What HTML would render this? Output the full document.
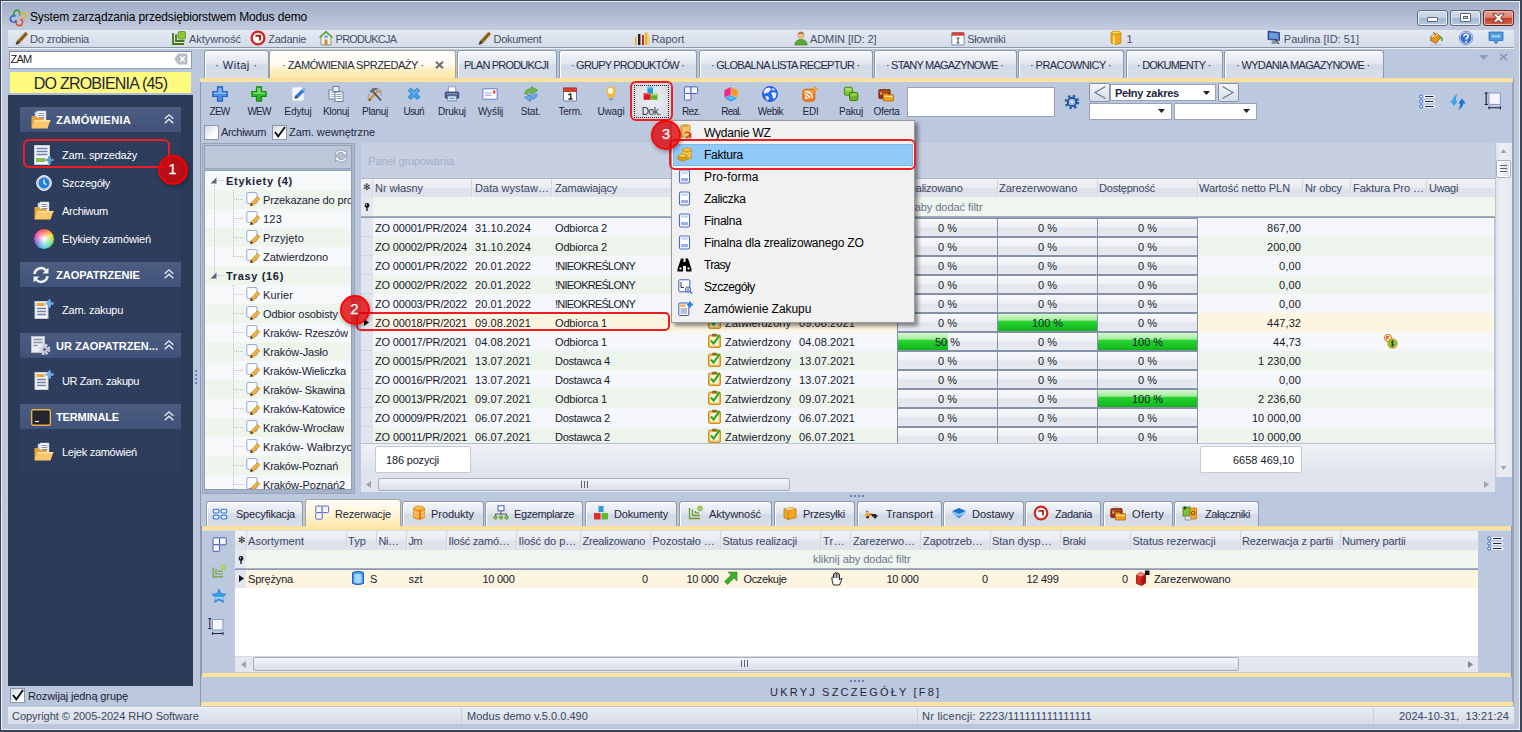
<!DOCTYPE html>
<html lang="pl"><head><meta charset="utf-8"><title>System zarządzania przedsiębiorstwem Modus demo</title>
<style>
*{box-sizing:border-box;margin:0;padding:0}
html,body{width:1522px;height:732px;overflow:hidden}
body{position:relative;font-family:"Liberation Sans","DejaVu Sans",sans-serif;font-size:11px;color:#1b2234;background:#b9c7dd;line-height:1}
.a{position:absolute}
.t{position:absolute;white-space:pre;line-height:13px;height:13px}
.r{text-align:right}
.c{text-align:center}
svg{position:absolute;overflow:visible}
#frame{left:0;top:0;width:1522px;height:732px;border:1px solid #3c4557;border-right-width:2px;border-bottom-width:2px;background:linear-gradient(180deg,#a2aec7 0,#a9b5cc 8px,#c4cde0 30px,#bfc9dc 60px,#bdc7da 100%)}
#frame2{left:1px;top:1px;width:1519px;height:729px;border:1px solid #e9eef6}
#client{left:8px;top:30px;width:1506px;height:695px;background:#bbc7dc}
#menubar{left:8px;top:30px;width:1506px;height:17px;background:linear-gradient(180deg,#e4e9f2,#d6dde9)}
#menuline{left:8px;top:47px;width:1506px;height:1px;background:#8d98ab}
#menuline2{left:8px;top:48px;width:1506px;height:1px;background:#eef1f6}
.mi{color:#353f55}

#nav{left:8px;top:95px;width:185px;height:591px;background:#2b3a57}
.gh{position:absolute;left:20px;width:161px;height:25px;background:linear-gradient(180deg,#4c5d81,#41527a)}
.gb{position:absolute;left:20px;width:161px;background:#2c3b59}
.ni{color:#fff}

.tab{position:absolute;top:50px;height:28px;border:1px solid #8d99ae;border-bottom:none;border-radius:3px 3px 0 0;background:linear-gradient(180deg,#f4f6fa 0,#e3e8f0 45%,#d3dae6 55%,#d9dfea 100%);box-shadow:inset 1px 1px 0 #fff}
.tab.act{background:linear-gradient(180deg,#fffefc 0,#fffaf0 50%,#fef0c8 62%,#fee6a6 100%);border-color:#a9a592;height:29px;box-shadow:none}
#panel{left:200px;top:78px;width:1314px;height:628px;border:1px solid #8d99ae;border-right:2px solid #98a4bc;border-top:none;background:#bcc8dd}

.cb{position:absolute;width:15px;height:15px;border:1px solid #8c97ab;background:linear-gradient(135deg,#d3d9e4,#fff 70%)}

.trow{position:absolute;left:205px;width:146px;height:19px}

.gr{position:absolute;left:373px;width:1121px;height:19px}
.pc{position:absolute;height:19px;width:101px;border:1px solid #8591a8;background:linear-gradient(180deg,#f8f9fb 0,#eff1f5 45%,#e2e5ec 55%,#e7eaf0 100%)}
.pg{position:absolute;height:17px;background:linear-gradient(180deg,#d4f8ce 0,#a6ec9e 36%,#2ad234 44%,#1cc626 70%,#12b41c 100%)}
.hd{color:#35415c}

.bt{position:absolute;top:501px;height:25px;border:1px solid #8d99ae;border-bottom:none;border-radius:3px 3px 0 0;background:linear-gradient(180deg,#f4f6fa 0,#e3e8f0 45%,#d3dae6 55%,#d9dfea 100%);box-shadow:inset 1px 1px 0 #fff}
.bt.act{top:499px;height:28px;background:linear-gradient(180deg,#fffefb 0,#fff4d6 50%,#fee7ab 100%);border-color:#a9a592;box-shadow:none}

#ddm{left:671px;top:120px;width:244px;height:203px;background:#f1f1f1;border:1px solid #9b9b9b;box-shadow:3px 3px 4px rgba(0,0,0,0.45)}

.rr{position:absolute;border:2px solid #ee1c25;border-radius:6px}
.rc{position:absolute;width:30px;height:30px;border-radius:50%;background:rgba(222,0,4,0.78);border:2px solid rgba(255,0,0,0.9);box-shadow:1px 2px 4px rgba(0,0,0,0.35);color:#fff;font-size:14.5px;line-height:25px;text-align:center;-webkit-text-stroke:0.25px #fff}
</style></head><body>
<!-- s00_base -->
<div id="frame" class="a"></div><div id="frame2" class="a"></div><div id="client" class="a"></div>
<svg style="left:9px;top:9px" width="18" height="18" viewBox="0 0 18 18">
<circle cx="8" cy="4.4" r="3.1" fill="none" stroke="#3f9a3c" stroke-width="1.5" stroke-dasharray="15 4.5" transform="rotate(120 8 4.4)"/>
<circle cx="14" cy="6.5" r="2.9" fill="none" stroke="#e8b21c" stroke-width="1.5" stroke-dasharray="14 4.2" transform="rotate(200 14 6.5)"/>
<circle cx="4.4" cy="10" r="3.1" fill="none" stroke="#2f5fd0" stroke-width="1.5" stroke-dasharray="15 4.5" transform="rotate(20 4.4 10)"/>
<circle cx="10.3" cy="13.3" r="3.2" fill="none" stroke="#d8482c" stroke-width="1.5" stroke-dasharray="15.5 4.6" transform="rotate(290 10.3 13.3)"/>
</svg><div class="t" style="left:30px;top:10px;font-size:12px;line-height:15px;height:15px;color:#000;letter-spacing:-0.15px">System zarządzania przedsiębiorstwem Modus demo</div>
<div class="a" style="left:1417px;top:10px;width:31px;height:16px;border:1px solid #5d6b84;border-radius:3px;background:linear-gradient(180deg,#d3deec 0,#c3d1e4 48%,#a3b8d2 52%,#b7c9df 100%);box-shadow:inset 0 0 0 1px #e6edf6"></div>
<div class="a" style="left:1427px;top:17px;width:11px;height:5px;border:1px solid #5b6476;border-radius:1px;background:#fff"></div>
<div class="a" style="left:1450px;top:10px;width:31px;height:16px;border:1px solid #5d6b84;border-radius:3px;background:linear-gradient(180deg,#d3deec 0,#c3d1e4 48%,#a3b8d2 52%,#b7c9df 100%);box-shadow:inset 0 0 0 1px #e6edf6"></div>
<div class="a" style="left:1460px;top:13px;width:11px;height:9px;border:1px solid #5b6476;border-radius:1px;background:#fff"></div>
<div class="a" style="left:1463px;top:16px;width:5px;height:3px;border:1px solid #5b6476;background:#c5d0e2"></div>
<div class="a" style="left:1483px;top:10px;width:31px;height:16px;border:1px solid #5e2024;border-radius:3px;background:linear-gradient(180deg,#e8a598 0,#d87f6f 48%,#c03e2a 52%,#d0664c 100%);box-shadow:inset 0 0 0 1px #efb9ae"></div>
<svg style="left:1492px;top:13px" width="13" height="10" viewBox="0 0 13 10"><path d="M0.8 0.8 L4.6 0.8 L6.5 3 L8.4 0.8 L12.2 0.8 L8.6 5 L12.2 9.2 L8.4 9.2 L6.5 7 L4.6 9.2 L0.8 9.2 L4.4 5 Z" fill="#fff" stroke="#6a3430" stroke-width="1" stroke-linejoin="round"/></svg>
<div id="menubar" class="a"></div><div id="menuline" class="a"></div><div id="menuline2" class="a"></div>
<div class="t " style="left:30.0px;top:33px;letter-spacing:-0.23px;color:#455069;">Do zrobienia</div><div class="t " style="left:189.0px;top:33px;letter-spacing:-0.06px;color:#455069;">Aktywność</div><div class="t " style="left:268.2px;top:33px;letter-spacing:-0.25px;color:#455069;">Zadanie</div><div class="t " style="left:335.6px;top:33px;letter-spacing:-0.80px;color:#455069;">PRODUKCJA</div><div class="t " style="left:493.5px;top:33px;letter-spacing:-0.27px;color:#455069;">Dokument</div><div class="t " style="left:651.4px;top:33px;color:#455069;">Raport</div><div class="t " style="left:810.0px;top:33px;letter-spacing:-0.10px;color:#455069;">ADMIN [ID: 2]</div><div class="t " style="left:967.3px;top:33px;letter-spacing:-0.29px;color:#455069;">Słowniki</div><div class="t " style="left:1126.6px;top:33px;color:#455069;">1</div><div class="t " style="left:1283.8px;top:33px;color:#455069;">Paulina [ID: 51]</div><svg style="left:15px;top:31px" width="14" height="15" viewBox="0 0 14 15"><path d="M1 13.5 L2.2 9.8 L10.5 1 L12.8 3.2 L4.5 12.2 Z" fill="#e8b84a" stroke="#7a5a1a" stroke-width="0.7"/><path d="M3.5 11 L11.5 2.2" stroke="#5a4010" stroke-width="1.6"/><path d="M1 13.5 L2.2 9.8 L4.5 12.2 Z" fill="#333"/><path d="M2 14.5 H9" stroke="#c9ced8" stroke-width="1"/></svg><svg style="left:172px;top:31px" width="14" height="14" viewBox="0 0 14 14"><rect x="6" y="0.5" width="7.5" height="7.5" rx="1.5" fill="#8cc63a" stroke="#4f8a1f" stroke-width="0.8"/><path d="M1 2 V13 H12 M4 3.5 V10 H12.5" fill="none" stroke="#3f7a12" stroke-width="1.8"/></svg><svg style="left:250px;top:30px" width="16" height="16" viewBox="0 0 16 16"><circle cx="8" cy="8" r="6.4" fill="#fff" stroke="#d0281e" stroke-width="2.4"/><path d="M5.5 5.8 H10 V10.5" fill="none" stroke="#a82018" stroke-width="1.9"/></svg><svg style="left:319px;top:30px" width="14" height="16" viewBox="0 0 14 16"><path d="M7 1 L13.5 7 H12 V15 H2 V7 H0.5 Z" fill="#f4f1ea" stroke="#8a7a5a" stroke-width="0.8"/><path d="M7 0.8 L13.8 7 L12.5 8 L7 3 L1.5 8 L0.2 7 Z" fill="#5fa83a"/><rect x="5.5" y="9.5" width="3" height="5.5" fill="#c98a3a"/><rect x="5" y="5.5" width="4" height="2.6" fill="#7fb2f0"/></svg><svg style="left:478px;top:31px" width="14" height="15" viewBox="0 0 14 15"><path d="M1 13.5 L2.2 9.8 L10.5 1 L12.8 3.2 L4.5 12.2 Z" fill="#e8b84a" stroke="#7a5a1a" stroke-width="0.7"/><path d="M3.5 11 L11.5 2.2" stroke="#5a4010" stroke-width="1.6"/><path d="M1 13.5 L2.2 9.8 L4.5 12.2 Z" fill="#333"/><path d="M2 14.5 H9" stroke="#c9ced8" stroke-width="1"/></svg><svg style="left:634px;top:31px" width="16" height="15" viewBox="0 0 16 15"><rect x="1" y="6" width="1.6" height="8" fill="#f2b01a"/><rect x="4" y="3" width="2.4" height="11" fill="#222"/><rect x="8" y="4" width="2" height="10" fill="#d0281e"/><rect x="11" y="1.5" width="2.4" height="12.5" fill="#f2b01a"/><rect x="14" y="3.5" width="1.4" height="10.5" fill="#f2d06a"/></svg><svg style="left:794px;top:31px" width="14" height="15" viewBox="0 0 14 15"><circle cx="7" cy="4" r="3.2" fill="#f2c38a" stroke="#b8844a" stroke-width="0.6"/><path d="M3.8 3 Q7 -0.5 10.2 3 Q7 2 3.8 3 Z" fill="#7a4a1a"/><path d="M0.8 14 Q1 8.5 7 8.5 Q13 8.5 13.2 14 Z" fill="#5fa83a" stroke="#3f7a12" stroke-width="0.6"/></svg><svg style="left:951px;top:31px" width="14" height="15" viewBox="0 0 14 15"><rect x="0.8" y="1.5" width="12.4" height="12.5" rx="1" fill="#fff" stroke="#7a86a8" stroke-width="1"/><rect x="0.8" y="1.5" width="12.4" height="3.2" fill="#d9402f"/><path d="M7 7 V12 M5.5 7 H8.5 M5.5 12 H8.5" stroke="#444" stroke-width="1"/></svg><svg style="left:1110px;top:30px" width="12" height="16" viewBox="0 0 12 16"><ellipse cx="6" cy="3" rx="5" ry="2" fill="#fbd24a" stroke="#b8860b" stroke-width="0.7"/><path d="M1 3 V13 Q6 16 11 13 V3 Q6 6 1 3 Z" fill="#f2a81a" stroke="#b8860b" stroke-width="0.7"/><path d="M4 5.5 V14.5" stroke="#fde59a" stroke-width="1.6"/></svg><svg style="left:1267px;top:30px" width="14" height="16" viewBox="0 0 14 16"><path d="M1 1 L12.5 2.5 V10.5 L1 9.5 Z" fill="#3a5aa8" stroke="#24387a" stroke-width="0.7"/><path d="M2.2 2.4 L11.3 3.6 V9.4 L2.2 8.4 Z" fill="#6a9ae0"/><path d="M5 10 L9 10.5 L10 14 H4.5 Z" fill="#8a93a8"/><path d="M8 9 L12 14" stroke="#333" stroke-width="1.2"/></svg><svg style="left:1429px;top:31px" width="14" height="15" viewBox="0 0 14 15"><path d="M2 5 L7.5 2 L12 6 L7 12.5 L1.5 9.5 Z" fill="#e8941c" stroke="#7a4a10" stroke-width="0.7"/><path d="M2 5 L7.5 2 L9 3.4 L3.5 6.5 Z" fill="#fbd58a"/><path d="M4 1 L7 4" stroke="#7a4a10" stroke-width="1"/><path d="M10.5 6 Q13.5 6.5 12.8 10" fill="none" stroke="#4fa83a" stroke-width="1.8"/><path d="M1 14 H13" stroke="#c3c9d6" stroke-width="1.6"/></svg><svg style="left:1459px;top:31px" width="14" height="14" viewBox="0 0 14 14"><circle cx="7" cy="7" r="6.3" fill="#3a6fd8" stroke="#eef2fa" stroke-width="1.2"/><circle cx="7" cy="7" r="6.8" fill="none" stroke="#3a5ab8" stroke-width="0.6"/><path d="M4.8 5.5 Q5 3.2 7 3.2 Q9.2 3.2 9.2 5.2 Q9.2 6.5 7.2 7.5 V8.6" fill="none" stroke="#fff" stroke-width="1.6"/><circle cx="7.2" cy="10.8" r="1" fill="#fff"/></svg><svg style="left:1488px;top:31px" width="16" height="14" viewBox="0 0 16 14"><path d="M1 1 H15 V9.5 H10.5 L8 12.8 L5.5 9.5 H1 Z" fill="#4a9be0" stroke="#2a6ab8" stroke-width="0.8"/><circle cx="5" cy="5.3" r="1" fill="none" stroke="#fff" stroke-width="0.7"/><circle cx="8" cy="5.3" r="1" fill="none" stroke="#fff" stroke-width="0.7"/><circle cx="11" cy="5.3" r="1" fill="none" stroke="#fff" stroke-width="0.7"/></svg>
<!-- s10_nav -->
<div class="a " style="left:8px;top:95px;width:185px;height:591px;background:#2b3a57"></div><svg style="left:0;top:0" width="0" height="0"><defs><pattern id="ndots" width="4" height="4" patternUnits="userSpaceOnUse"><rect x="0" y="1" width="1" height="1" fill="#3c4d70"/><rect x="2" y="3" width="1" height="1" fill="#3c4d70"/></pattern></defs></svg><div class="a " style="left:9px;top:51px;width:183px;height:18px;background:#fff;border:1px solid #8f9bb0;border-top-color:#7d899e"></div><div class="t " style="left:10.5px;top:53px;letter-spacing:-0.80px;color:#222;">ZAM</div><svg style="left:174px;top:53px" width="14" height="12" viewBox="0 0 14 11" preserveAspectRatio="none"><path d="M4 0.5 H12.5 Q13.5 0.5 13.5 1.5 V9.5 Q13.5 10.5 12.5 10.5 H4 L0.3 5.5 Z" fill="#b9bdc4"/><path d="M6.3 3.2 L10.7 7.8 M10.7 3.2 L6.3 7.8" stroke="#fff" stroke-width="1.5"/></svg><div class="a " style="left:10px;top:72px;width:181px;height:21px;background:#fffb7e"></div><div class="a " style="left:8px;top:93px;width:185px;height:2px;background:#b4bfd3"></div><div class="t " style="left:33.8px;top:75px;letter-spacing:-0.78px;font-size:16px;color:#1f2638;line-height:18px;height:18px;">DO ZROBIENIA (45)</div><div class="gh" style="top:107px"></div><svg style="left:31px;top:111px" width="20" height="18" viewBox="0 0 20 18">
<path d="M4 1 H13 V12 H4 Z" fill="#eef1f6" stroke="#aab3c4" stroke-width="0.6"/>
<path d="M6 0 H15 V11 H6 Z" fill="#fff" stroke="#aab3c4" stroke-width="0.6"/>
<path d="M7.5 2.5 H13.5 M7.5 4.5 H13.5 M7.5 6.5 H13.5" stroke="#7f8fb5" stroke-width="1"/>
<path d="M0.5 5 H5 L6.5 7 H13 V17 H0.5 Z" fill="#e9a33c"/>
<path d="M3.5 9 H19.5 L16.5 17.5 H0.5 Z" fill="#fbc768"/>
<path d="M3.5 9 H19.5 L19 10.5 H3 Z" fill="#fde1a3"/>
</svg><div class="t " style="left:56.0px;top:114px;letter-spacing:0.29px;font-weight:bold;color:#fff;">ZAMÓWIENIA</div><svg style="left:164px;top:114px" width="10" height="10" viewBox="0 0 10 10"><path d="M0.7 4.8 L5 0.8 L9.3 4.8 M0.7 9.2 L5 5.2 L9.3 9.2" fill="none" stroke="#e8ecf4" stroke-width="1.3"/></svg><div class="gb" style="top:132px;height:130px"><svg style="left:0;top:0" width="161" height="130"><rect width="161" height="130" fill="url(#ndots)"/></svg></div><svg style="left:34px;top:145px" width="20" height="20" viewBox="0 0 20 20">
<rect x="0.5" y="0.5" width="15" height="19" fill="#f4f5f8" stroke="#c7ccd6" stroke-width="1"/>
<path d="M2.5 3.5 H13.5 M2.5 6.5 H13.5 M2.5 9.5 H13.5" stroke="#6f7fb0" stroke-width="1.6"/><rect x="2" y="13" width="9" height="4" fill="#8dbb4e"/>
<path d="M15.5 11 V19 M11.5 15 H19.5" stroke="#5b9bd5" stroke-width="2.6"/>
</svg><div class="t ni" style="left:62.0px;top:149px;letter-spacing:-0.23px;">Zam. sprzedaży</div><svg style="left:36px;top:175px" width="16" height="16" viewBox="0 0 16 16">
<circle cx="8" cy="8" r="7.4" fill="#c9ccd3" stroke="#eef0f3" stroke-width="1"/>
<circle cx="8" cy="8" r="5.4" fill="#1f7fe0"/>
<path d="M8 4.5 V8 L10.3 9.8" stroke="#fff" stroke-width="1.3" fill="none"/></svg><div class="t ni" style="left:62.0px;top:177px;letter-spacing:-0.24px;">Szczegóły</div><svg style="left:34px;top:202px" width="20" height="18" viewBox="0 0 20 18">
<path d="M4 1 H13 V12 H4 Z" fill="#eef1f6" stroke="#aab3c4" stroke-width="0.6"/>
<path d="M6 0 H15 V11 H6 Z" fill="#fff" stroke="#aab3c4" stroke-width="0.6"/>
<path d="M7.5 2.5 H13.5 M7.5 4.5 H13.5 M7.5 6.5 H13.5" stroke="#7f8fb5" stroke-width="1"/>
<path d="M0.5 5 H5 L6.5 7 H13 V17 H0.5 Z" fill="#e9a33c"/>
<path d="M3.5 9 H19.5 L16.5 17.5 H0.5 Z" fill="#fbc768"/>
<path d="M3.5 9 H19.5 L19 10.5 H3 Z" fill="#fde1a3"/>
</svg><div class="t ni" style="left:62.0px;top:205px;letter-spacing:-0.29px;">Archiwum</div><div class="a" style="left:34px;top:229px;width:20px;height:20px;border-radius:50%;background:conic-gradient(#ff3b30,#ffcc00,#4cd964,#34c8e8,#5856d6,#ff2d95,#ff3b30)"></div><div class="a" style="left:34px;top:229px;width:20px;height:20px;border-radius:50%;background:radial-gradient(circle,#fff 0,rgba(255,255,255,0.2) 60%,rgba(255,255,255,0) 75%)"></div><div class="t ni" style="left:62.0px;top:233px;letter-spacing:-0.12px;">Etykiety zamówień</div><div class="gh" style="top:262px"></div><svg style="left:32px;top:266px" width="18" height="18" viewBox="0 0 18 18">
<path d="M2.5 8 A6.5 6.5 0 0 1 14 4.5" fill="none" stroke="#eef1f6" stroke-width="2.6"/><path d="M16.5 1.5 V7.5 H10.5 Z" fill="#eef1f6"/>
<path d="M15.5 10 A6.5 6.5 0 0 1 4 13.5" fill="none" stroke="#eef1f6" stroke-width="2.6"/><path d="M1.5 16.5 V10.5 H7.5 Z" fill="#eef1f6"/></svg><div class="t " style="left:56.0px;top:269px;font-weight:bold;color:#fff;">ZAOPATRZENIE</div><svg style="left:164px;top:269px" width="10" height="10" viewBox="0 0 10 10"><path d="M0.7 4.8 L5 0.8 L9.3 4.8 M0.7 9.2 L5 5.2 L9.3 9.2" fill="none" stroke="#e8ecf4" stroke-width="1.3"/></svg><div class="gb" style="top:287px;height:46px"><svg style="left:0;top:0" width="161" height="46"><rect width="161" height="46" fill="url(#ndots)"/></svg></div><svg style="left:34px;top:299px" width="20" height="20" viewBox="0 0 20 20">
<rect x="1" y="2.5" width="13" height="17" fill="#f4f5f8" stroke="#c7ccd6" stroke-width="1"/>
<rect x="2.5" y="4" width="8" height="3" fill="#f0a53a"/>
<path d="M3 9.5 H12 M3 12.5 H12 M3 15.5 H12" stroke="#6f7fb0" stroke-width="1.6"/>
<path d="M15.5 0.5 V8.5 M11.5 4.5 H19.5" stroke="#6fb0ec" stroke-width="2.6"/>
</svg><div class="t ni" style="left:62.0px;top:304px;letter-spacing:-0.23px;">Zam. zakupu</div><div class="gh" style="top:333px"></div><svg style="left:31px;top:336px" width="20" height="20" viewBox="0 0 20 20">
<rect x="0.5" y="0.5" width="13" height="16" fill="#e9ecf2" stroke="#b9c0cd"/>
<path d="M2.5 3.5 H11.5 M2.5 6.5 H11.5 M2.5 9.5 H6.5" stroke="#8a93a8" stroke-width="1.4"/>
<circle cx="13.5" cy="13.5" r="4.2" fill="none" stroke="#d5d9e2" stroke-width="3" stroke-dasharray="2.2 1.1"/><circle cx="13.5" cy="13.5" r="3" fill="#c3c8d4"/><circle cx="13.5" cy="13.5" r="1.3" fill="#4a5a7c"/></svg><div class="t " style="left:56.0px;top:340px;letter-spacing:0.02px;font-weight:bold;color:#fff;">UR ZAOPATRZEN...</div><svg style="left:164px;top:340px" width="10" height="10" viewBox="0 0 10 10"><path d="M0.7 4.8 L5 0.8 L9.3 4.8 M0.7 9.2 L5 5.2 L9.3 9.2" fill="none" stroke="#e8ecf4" stroke-width="1.3"/></svg><div class="gb" style="top:358px;height:46px"><svg style="left:0;top:0" width="161" height="46"><rect width="161" height="46" fill="url(#ndots)"/></svg></div><svg style="left:34px;top:370px" width="20" height="20" viewBox="0 0 20 20">
<rect x="1" y="2.5" width="13" height="17" fill="#f4f5f8" stroke="#c7ccd6" stroke-width="1"/>
<rect x="2.5" y="4" width="8" height="3" fill="#f0a53a"/>
<path d="M3 9.5 H12 M3 12.5 H12 M3 15.5 H12" stroke="#6f7fb0" stroke-width="1.6"/>
<path d="M15.5 0.5 V8.5 M11.5 4.5 H19.5" stroke="#6fb0ec" stroke-width="2.6"/>
</svg><div class="t ni" style="left:62.0px;top:375px;letter-spacing:-0.39px;">UR Zam. zakupu</div><div class="gh" style="top:404px"></div><svg style="left:31px;top:409px" width="20" height="17" viewBox="0 0 20 17">
<rect x="0.7" y="0.7" width="18.6" height="15.6" rx="1.5" fill="#1d1f24" stroke="#f2b04a" stroke-width="1.4"/>
<rect x="2.5" y="2.5" width="15" height="12" fill="#23262d"/><path d="M4 12.5 H8" stroke="#fff" stroke-width="1.2"/></svg><div class="t " style="left:56.0px;top:411px;letter-spacing:-0.13px;font-weight:bold;color:#fff;">TERMINALE</div><svg style="left:164px;top:411px" width="10" height="10" viewBox="0 0 10 10"><path d="M0.7 4.8 L5 0.8 L9.3 4.8 M0.7 9.2 L5 5.2 L9.3 9.2" fill="none" stroke="#e8ecf4" stroke-width="1.3"/></svg><div class="gb" style="top:429px;height:43px"><svg style="left:0;top:0" width="161" height="43"><rect width="161" height="43" fill="url(#ndots)"/></svg></div><svg style="left:34px;top:443px" width="20" height="18" viewBox="0 0 20 18">
<path d="M4 1 H13 V12 H4 Z" fill="#eef1f6" stroke="#aab3c4" stroke-width="0.6"/>
<path d="M6 0 H15 V11 H6 Z" fill="#fff" stroke="#aab3c4" stroke-width="0.6"/>
<path d="M7.5 2.5 H13.5 M7.5 4.5 H13.5 M7.5 6.5 H13.5" stroke="#7f8fb5" stroke-width="1"/>
<path d="M0.5 5 H5 L6.5 7 H13 V17 H0.5 Z" fill="#e9a33c"/>
<path d="M3.5 9 H19.5 L16.5 17.5 H0.5 Z" fill="#fbc768"/>
<path d="M3.5 9 H19.5 L19 10.5 H3 Z" fill="#fde1a3"/>
</svg><div class="t ni" style="left:62.0px;top:446px;letter-spacing:-0.28px;">Lejek zamówień</div><div class="a " style="left:10px;top:688px;width:15px;height:15px;background:linear-gradient(135deg,#d3d9e4,#fff 70%);border:1px solid #8b96aa"></div><svg style="left:12px;top:689px" width="12" height="12" viewBox="0 0 10 10"><path d="M0.8 5 L3.6 8.6 L9.2 0.8" fill="none" stroke="#111" stroke-width="1.6"/></svg><div class="t " style="left:28.0px;top:690px;letter-spacing:-0.11px;color:#1b2234;">Rozwijaj jedną grupę</div><!-- s20_tabs -->
<div class="a" id="panel" style="left:200px;top:78px;width:1314px;height:628px;"></div><div class="tab" style="left:204px;width:65px"></div><div class="tab act" style="left:269px;width:187px"></div><div class="tab" style="left:457px;width:100px"></div><div class="tab" style="left:559px;width:138px"></div><div class="tab" style="left:699px;width:174px"></div><div class="tab" style="left:874px;width:143px"></div><div class="tab" style="left:1018px;width:106px"></div><div class="tab" style="left:1126px;width:97px"></div><div class="tab" style="left:1224px;width:160px"></div><div class="a " style="left:200px;top:78px;width:1313px;height:4px;background:#fde29b;border-top:1px solid #f3dca4"></div><div class="t " style="left:215.0px;top:59px;letter-spacing:0.52px;color:#222b45;">· Witaj ·</div><div class="t " style="left:282.0px;top:59px;letter-spacing:-0.46px;color:#222b45;">· ZAMÓWIENIA SPRZEDAŻY ·</div><div class="t " style="left:464.0px;top:59px;letter-spacing:-0.80px;color:#222b45;">PLAN PRODUKCJI</div><div class="t " style="left:571.0px;top:59px;letter-spacing:-0.80px;color:#222b45;">· GRUPY PRODUKTÓW ·</div><div class="t " style="left:711.0px;top:59px;letter-spacing:-0.72px;color:#222b45;">· GLOBALNA LISTA RECEPTUR ·</div><div class="t " style="left:886.0px;top:59px;letter-spacing:-0.80px;color:#222b45;">· STANY MAGAZYNOWE ·</div><div class="t " style="left:1030.0px;top:59px;letter-spacing:-0.56px;color:#222b45;">· PRACOWNICY ·</div><div class="t " style="left:1137.0px;top:59px;letter-spacing:-0.79px;color:#222b45;">· DOKUMENTY ·</div><div class="t " style="left:1236.0px;top:59px;letter-spacing:-0.65px;color:#222b45;">· WYDANIA MAGAZYNOWE ·</div><svg style="left:435px;top:61px" width="9" height="8" viewBox="0 0 9 8"><path d="M1 0.8 L8 7.2 M8 0.8 L1 7.2" stroke="#6a6c72" stroke-width="2"/></svg><svg style="left:1479px;top:55px" width="9" height="5" viewBox="0 0 9 5"><path d="M0 0 H9 L4.5 5 Z" fill="#8a9bc0"/></svg><svg style="left:1499px;top:53px" width="9" height="8" viewBox="0 0 9 8"><path d="M1 0.8 L8 7.2 M8 0.8 L1 7.2" stroke="#8a9bc0" stroke-width="1.8"/></svg><!-- s30_toolbar -->
<div class="a " style="left:631px;top:82px;width:41px;height:38px;background:#d6d8de;border-radius:5px"></div><div class="a " style="left:634px;top:85px;width:35px;height:33px;border:1px dotted #222;background:radial-gradient(ellipse at 50% 45%,#eceef3 0,#e2e5eb 50%,#d3d6dd 100%)"></div><svg style="left:212px;top:86px" width="16" height="16" viewBox="0 0 16 16"><path d="M5.5 0.8 H10.5 V5.5 H15.2 V10.5 H10.5 V15.2 H5.5 V10.5 H0.8 V5.5 H5.5 Z" fill="#4a90e2" stroke="#2462c4" stroke-width="1.2"/><path d="M6.5 2 H9.5 V6.5 H14 V8 H2 V6.5 H6.5 Z" fill="#8fc0f4" opacity="0.8"/></svg><div class="t " style="left:209.6px;top:105px;letter-spacing:-0.80px;font-size:10px;color:#1e2740;">ZEW</div><svg style="left:251px;top:86px" width="16" height="16" viewBox="0 0 16 16"><path d="M5.5 0.8 H10.5 V5.5 H15.2 V10.5 H10.5 V15.2 H5.5 V10.5 H0.8 V5.5 H5.5 Z" fill="#2fb52a" stroke="#1c8a1b" stroke-width="1.2"/><path d="M6.5 2 H9.5 V6.5 H14 V8 H2 V6.5 H6.5 Z" fill="#8be27f" opacity="0.8"/></svg><div class="t " style="left:247.4px;top:105px;letter-spacing:-0.80px;font-size:10px;color:#1e2740;">WEW</div><svg style="left:290px;top:86px" width="16" height="16" viewBox="0 0 16 16"><path d="M2 3 Q2 1 4 1 H12 L14 3 V13 Q14 15 12 15 H4 Q2 15 2 13 Z" fill="#f7f8fb" stroke="#c9cfdb" stroke-width="0.8"/><path d="M4.5 12.5 L5.5 9.5 L12 3 L14.5 5.5 L8 12 Z" fill="#2f7be0"/><path d="M4.5 12.5 L5.5 9.5 L8 12 Z" fill="#444"/><path d="M12 3 L13 2 Q14 1.5 15 2.5 Q16 3.5 15.5 4.5 L14.5 5.5 Z" fill="#7fb2f0"/></svg><div class="t " style="left:284.3px;top:105px;letter-spacing:-0.07px;font-size:10px;color:#1e2740;">Edytuj</div><svg style="left:328px;top:86px" width="16" height="16" viewBox="0 0 16 16"><rect x="1" y="4" width="8" height="9" fill="#fff" stroke="#6f7da0" stroke-width="1"/><path d="M2.5 6.5 H7.5 M2.5 8.5 H7.5 M2.5 10.5 H7.5" stroke="#9aa6c4" stroke-width="0.8"/><rect x="5" y="0.5" width="6" height="5" fill="#e9edf5" stroke="#6f7da0" stroke-width="1"/><rect x="7" y="6" width="8" height="9.5" fill="#fff" stroke="#6f7da0" stroke-width="1"/><path d="M8.5 8.5 H13.5 M8.5 10.5 H13.5 M8.5 12.5 H13.5" stroke="#7f8db0" stroke-width="0.9"/></svg><div class="t " style="left:323.0px;top:105px;letter-spacing:-0.30px;font-size:10px;color:#1e2740;">Klonuj</div><svg style="left:367px;top:86px" width="16" height="16" viewBox="0 0 16 16"><path d="M2 14.5 L11.5 4" stroke="#e8901c" stroke-width="2"/><path d="M2 14.5 L3.5 13" stroke="#7a4a10" stroke-width="2.2"/><path d="M14 14.5 L5 4.5" stroke="#4a4f5c" stroke-width="1.8"/><path d="M3 5.5 Q5 1.5 9.5 2.5 L8.5 4 Q6 3.5 4.5 6.5 Z" fill="#767c8a" stroke="#4a4f5c" stroke-width="0.6"/><path d="M10 2 L14.5 5.5 L13 7 L9 3.5 Z" fill="#c3c7d0" stroke="#555" stroke-width="0.6"/><path d="M1 8.5 L2.5 9.5 M0.5 11 L2 11 M13.5 9 L15 8.5" stroke="#555" stroke-width="0.7"/></svg><div class="t " style="left:362.1px;top:105px;letter-spacing:-0.33px;font-size:10px;color:#1e2740;">Planuj</div><svg style="left:406px;top:86px" width="16" height="16" viewBox="0 0 16 16"><path d="M2.4 4.6 L4.9 2.4 L8 5.5 L11.1 2.4 L13.6 4.6 L10.4 7.8 L13.6 11 L11.1 13.2 L8 10.1 L4.9 13.2 L2.4 11 L5.6 7.8 Z" fill="#4b9fe0" stroke="#3b8fd6" stroke-width="1.2" stroke-linejoin="round"/><path d="M4.9 3.6 L8 6.7 L11.1 3.6 L12 4.6 L8 8.4 L4 4.6 Z" fill="#7fc0f0" opacity="0.7"/></svg><div class="t " style="left:403.5px;top:105px;letter-spacing:-0.80px;font-size:10px;color:#1e2740;">Usuń</div><svg style="left:444px;top:86px" width="16" height="16" viewBox="0 0 16 16"><rect x="4.3" y="0.8" width="7.4" height="6.5" fill="#fff" stroke="#8a96c0" stroke-width="0.9"/><rect x="1.2" y="6" width="13.6" height="6.2" rx="1.2" fill="#46568a" stroke="#2f3c68" stroke-width="0.8"/><rect x="2.4" y="7" width="11.2" height="1.4" fill="#7f8fc0"/><rect x="3.8" y="10" width="8.4" height="4.8" fill="#fff" stroke="#6f7da8" stroke-width="0.9"/><rect x="5.2" y="11.6" width="5.6" height="1.6" fill="#4aa0e8"/></svg><div class="t " style="left:438.1px;top:105px;letter-spacing:-0.20px;font-size:10px;color:#1e2740;">Drukuj</div><svg style="left:482px;top:86px" width="16" height="16" viewBox="0 0 16 16"><rect x="0.8" y="2.8" width="14.4" height="10.4" rx="0.8" fill="#fbfcff" stroke="#6a7fd0" stroke-width="1.1"/><path d="M3 7 H9.5 M3 9.3 H9.5" stroke="#9aa6c8" stroke-width="1"/><rect x="11" y="4.5" width="2.4" height="3" fill="#e8452c"/></svg><div class="t " style="left:477.9px;top:105px;letter-spacing:-0.12px;font-size:10px;color:#1e2740;">Wyślij</div><svg style="left:523px;top:86px" width="16" height="16" viewBox="0 0 16 16"><path d="M1.8 7.6 Q2.2 2.6 8.6 3 V0.6 L14.6 4.4 L8.6 8 V5.8 Q5 5.6 4.4 8.2 Z" fill="#6cc04a" stroke="#3d8a24" stroke-width="0.7" stroke-linejoin="round"/><path d="M14.2 8.4 Q13.8 13.4 7.4 13 V15.4 L1.4 11.6 L7.4 8 V10.2 Q11 10.4 11.6 7.8 Z" fill="#6aa8e8" stroke="#3f7ac8" stroke-width="0.7" stroke-linejoin="round"/></svg><div class="t " style="left:520.8px;top:105px;letter-spacing:-0.19px;font-size:10px;color:#1e2740;">Stat.</div><svg style="left:562px;top:86px" width="16" height="16" viewBox="0 0 16 16"><rect x="1.5" y="2" width="13" height="13" rx="1" fill="#fff" stroke="#6a78a8" stroke-width="1"/><rect x="1.5" y="2" width="13" height="3.6" fill="#d9402f" stroke="#b32b20" stroke-width="0.8"/><path d="M6.3 9 L8 8 H8.8 V13 M6.5 13 H10.5" stroke="#222" stroke-width="1.3" fill="none"/></svg><div class="t " style="left:558.5px;top:105px;letter-spacing:-0.22px;font-size:10px;color:#1e2740;">Term.</div><svg style="left:603px;top:86px" width="16" height="16" viewBox="0 0 16 16"><path d="M8 0.8 Q12.6 0.8 12.6 5.4 Q12.6 8 10.6 10 V11.4 H5.4 V10 Q3.4 8 3.4 5.4 Q3.4 0.8 8 0.8 Z" fill="#f9b52c"/><ellipse cx="7.6" cy="5" rx="2.8" ry="3.2" fill="#fff3c0"/><ellipse cx="7.4" cy="4.4" rx="1.5" ry="1.8" fill="#fff"/><path d="M5.8 11.8 H10.2 V13.6 Q8 15.6 5.8 13.6 Z" fill="#8a8f9c"/><path d="M5.8 12.6 H10.2" stroke="#c9ccd4" stroke-width="0.6"/></svg><div class="t " style="left:597.4px;top:105px;letter-spacing:-0.12px;font-size:10px;color:#1e2740;">Uwagi</div><svg style="left:643px;top:86px" width="16" height="16" viewBox="0 0 16 16"><rect x="4.4" y="0.8" width="5.6" height="7" fill="#1f9ad8"/><rect x="4.4" y="0.8" width="5.6" height="1.6" fill="#5fc0f0"/><rect x="0.6" y="7" width="7" height="6.8" fill="#e0141e"/><rect x="0.6" y="7" width="7" height="1.6" fill="#f05a5a"/><rect x="7.8" y="7.8" width="6.8" height="6" fill="#5cb82a"/><rect x="7.8" y="7.8" width="6.8" height="1.6" fill="#a0e070"/></svg><div class="t " style="left:641.8px;top:105px;letter-spacing:-0.42px;font-size:10px;color:#1e2740;">Dok.</div><svg style="left:683px;top:86px" width="16" height="16" viewBox="0 0 16 16"><rect x="1.4" y="0.9" width="6.6" height="6.6" rx="0.8" fill="#f4f7ff" stroke="#3d50c0" stroke-width="0.9"/><rect x="8" y="0.9" width="6.6" height="6.6" rx="0.8" fill="#f4f7ff" stroke="#3d50c0" stroke-width="0.9"/><rect x="1.4" y="7.5" width="6.6" height="6.6" rx="0.8" fill="#f4f7ff" stroke="#3d50c0" stroke-width="0.9"/></svg><div class="t " style="left:682.1px;top:105px;letter-spacing:-0.72px;font-size:10px;color:#1e2740;">Rez.</div><svg style="left:723px;top:86px" width="16" height="16" viewBox="0 0 16 16"><path d="M1.4 4.2 L7.7 1 V9 L1.4 11.6 Z" fill="#f0288a"/><path d="M14.6 4.2 L8.3 1 V9 L14.6 11.6 Z" fill="#f79a1a"/><path d="M1.8 12.2 L8 9.6 L14.2 12.2 L8 15.4 Z" fill="#28a0f0"/><path d="M8 10.4 L11.6 12 L8 13.8 L4.4 12 Z" fill="#7fd0ff" opacity="0.7"/></svg><div class="t " style="left:721.2px;top:105px;letter-spacing:-0.75px;font-size:10px;color:#1e2740;">Real.</div><svg style="left:762px;top:86px" width="16" height="16" viewBox="0 0 16 16"><circle cx="8" cy="8" r="7.5" fill="#2468f0" stroke="#1a48c8" stroke-width="0.8"/><path d="M2.5 4 Q4 1.5 7 1.5 Q9.5 2.5 8 4.5 Q7 6.5 4.5 7 Q3 8.5 1.8 7 Q1.5 5.5 2.5 4 Z M9.5 6.5 Q12.5 5.5 14.5 7.5 Q14.5 11 12 13 Q10 11.5 10.5 9.5 Q9 8 9.5 6.5 Z M3.5 10 Q6 9.5 7 11.5 Q7 14 5.5 14.5 Q3.5 13 3.5 10 Z M10 2 Q12 2.5 13 4 Q11.5 4.5 10.5 3.5 Z" fill="#eef4ff"/><path d="M1.5 5.5 Q8 -1 14.5 5.5 Q8 2.5 1.5 5.5 Z" fill="#fff" opacity="0.35"/></svg><div class="t " style="left:757.8px;top:105px;letter-spacing:-0.46px;font-size:10px;color:#1e2740;">Webik</div><svg style="left:802px;top:86px" width="16" height="16" viewBox="0 0 16 16"><rect x="0.8" y="3.2" width="12" height="12" rx="2.6" fill="#f57c14" stroke="#d85a04" stroke-width="0.8"/><path d="M1.6 5 Q1.8 4 3 3.9 H10.8 Q12 4 12.2 5 V8 Q7 6.5 1.6 8.5 Z" fill="#fba552" opacity="0.8"/><circle cx="4.2" cy="11.9" r="1.4" fill="#fff"/><path d="M2.9 8.4 Q6.9 8.4 7.8 12.4 M2.9 5.6 Q9.6 5.6 10.6 12.4" fill="none" stroke="#fff" stroke-width="1.5"/><path d="M13 0.2 L13.7 2.3 L15.8 3 L13.7 3.7 L13 5.8 L12.3 3.7 L10.2 3 L12.3 2.3 Z" fill="#fbb040" stroke="#e0780a" stroke-width="0.5"/></svg><div class="t " style="left:802.6px;top:105px;letter-spacing:-0.29px;font-size:10px;color:#1e2740;">EDI</div><svg style="left:843px;top:86px" width="16" height="16" viewBox="0 0 16 16"><rect x="1.4" y="1.2" width="8" height="8" rx="1.2" fill="#84c83a" stroke="#4a8a14" stroke-width="1"/><rect x="2.4" y="2.2" width="6" height="2.4" fill="#b4e47a" opacity="0.8"/><rect x="6.6" y="6.4" width="8.2" height="8.2" rx="1.2" fill="#6cb424" stroke="#3f7a10" stroke-width="1"/><rect x="7.6" y="7.4" width="6.2" height="2.4" fill="#a8dc6a" opacity="0.8"/></svg><div class="t " style="left:839.0px;top:105px;letter-spacing:-0.22px;font-size:10px;color:#1e2740;">Pakuj</div><svg style="left:878px;top:86px" width="16" height="16" viewBox="0 0 16 16"><rect x="0.8" y="3.6" width="11.4" height="9" rx="1.2" fill="#9a3216" stroke="#6a1c0a" stroke-width="0.8"/><path d="M4 3.6 V2 H8.6 V3.6" fill="none" stroke="#c9c2b8" stroke-width="1.1"/><rect x="2.2" y="6.4" width="2" height="2.2" fill="#f0c060"/><path d="M1 5.6 H12" stroke="#c05a30" stroke-width="1"/><path d="M5.4 7.6 H9.4 L10.4 8.8 H15.4 V15 H5.4 Z" fill="#f0a01c" stroke="#b06a08" stroke-width="0.8"/><path d="M5.8 10.4 H15" stroke="#fbd88a" stroke-width="1.4"/></svg><div class="t " style="left:873.5px;top:105px;letter-spacing:-0.30px;font-size:10px;color:#1e2740;">Oferta</div><div class="a " style="left:907px;top:87px;width:148px;height:30px;background:#fff;border:1px solid #97a2b6"></div><svg style="left:1064px;top:94px" width="16" height="16" viewBox="0 0 16 16"><circle cx="8" cy="8" r="6" fill="none" stroke="#2a62b0" stroke-width="2.6" stroke-dasharray="2.4 2.31"/><circle cx="8" cy="8" r="4.2" fill="#cfe0f5" stroke="#174a8c" stroke-width="1.8"/><circle cx="8" cy="8" r="2.2" fill="#eef3fa" stroke="#3a7ad0" stroke-width="0.8"/></svg><div class="a " style="left:1089px;top:83px;width:21px;height:19px;border:1px solid #8893a8;border-radius:2px;background:linear-gradient(180deg,#f4f6fa,#d6dde9)"></div><svg style="left:1094px;top:86px" width="12" height="13" viewBox="0 0 12 13"><path d="M11.5 0.5 L1 6.5 L11.5 12.5" fill="none" stroke="#6a7388" stroke-width="1.1"/></svg><div class="a " style="left:1218px;top:83px;width:21px;height:19px;border:1px solid #8893a8;border-radius:2px;background:linear-gradient(180deg,#f4f6fa,#d6dde9)"></div><svg style="left:1222px;top:86px" width="12" height="13" viewBox="0 0 12 13"><path d="M0.5 0.5 L11 6.5 L0.5 12.5" fill="none" stroke="#6a7388" stroke-width="1.1"/></svg><div class="a " style="left:1110px;top:84px;width:106px;height:17px;background:#fff;border:1px solid #97a2b6"></div><div class="t " style="left:1115.0px;top:87px;letter-spacing:-0.22px;font-weight:bold;color:#1e2740;">Pełny zakres</div><svg style="left:1203px;top:91px" width="7" height="4" viewBox="0 0 7 4"><path d="M0 0 H7 L3.5 4 Z" fill="#222"/></svg><div class="a " style="left:1089px;top:103px;width:83px;height:17px;background:#fff;border:1px solid #97a2b6"></div><svg style="left:1158px;top:109px" width="7" height="4" viewBox="0 0 7 4"><path d="M0 0 H7 L3.5 4 Z" fill="#222"/></svg><div class="a " style="left:1174px;top:103px;width:83px;height:17px;background:#fff;border:1px solid #97a2b6"></div><svg style="left:1243px;top:109px" width="7" height="4" viewBox="0 0 7 4"><path d="M0 0 H7 L3.5 4 Z" fill="#222"/></svg><svg style="left:1419px;top:94px" width="16" height="15" viewBox="0 0 16 15"><path d="M5.5 2.5 H15 M5.5 7.5 H15 M5.5 12.5 H15" stroke="#fff" stroke-width="2.6" stroke-linecap="round"/><circle cx="2.2" cy="2.5" r="1.6" fill="#e8f2ff" stroke="#2a66d0" stroke-width="1"/><circle cx="2.2" cy="7.5" r="1.6" fill="#e8f2ff" stroke="#2a66d0" stroke-width="1"/><circle cx="2.2" cy="12.5" r="1.6" fill="#e8f2ff" stroke="#2a66d0" stroke-width="1"/><path d="M6 2.5 H14.5 M6 7.5 H14.5 M6 12.5 H14.5" stroke="#1c2748" stroke-width="1"/></svg><svg style="left:1450px;top:94px" width="16" height="16" viewBox="0 0 16 16"><path d="M7.6 0 Q2.4 2.5 2.6 6.8 L0.2 6.8 L4 12 L7.8 6.8 L5.8 6.8 Q5.6 3 7.6 0 Z" fill="#3aa2ea"/><path d="M8.2 16 Q13.4 13.5 13.2 9.6 L15.8 9.6 L12 4.4 L8.2 9.6 L10.2 9.6 Q10.4 13 8.2 16 Z" fill="#1a74cc"/></svg><svg style="left:1484px;top:92px" width="18" height="19" viewBox="0 0 18 19"><rect x="5" y="1" width="11.4" height="11.4" fill="#f6f7fd" stroke="#8a92d0" stroke-width="1"/><path d="M0.6 1 H3.8 M2.2 1 V12.5 M0.6 12.5 H3.8" stroke="#10183a" stroke-width="1.1"/><path d="M5 14.3 V17.3 M5 15.8 H16.4 M16.4 14.3 V17.3" stroke="#10183a" stroke-width="1.1"/></svg><div class="cb" style="left:204px;top:125px"></div><div class="t " style="left:221.0px;top:126px;letter-spacing:-0.41px;color:#1e2740;">Archiwum</div><div class="cb" style="left:272px;top:125px"></div><svg style="left:274px;top:126px" width="12" height="12" viewBox="0 0 12 12"><path d="M1 6 L4.2 10.4 L11 1" fill="none" stroke="#111" stroke-width="1.8"/></svg><div class="t " style="left:289.0px;top:126px;letter-spacing:-0.05px;color:#1e2740;">Zam. wewnętrzne</div><!-- s40_tree -->
<div class="a " style="left:202px;top:143px;width:153px;height:351px;border:1px solid #97a4bc;background:#a7b3c9;box-shadow:inset 1px 1px 0 #b4bfd2"></div><div class="a " style="left:204px;top:145px;width:148px;height:345px;border:1px solid #909db6;background:#f6f8fa"></div><div class="a " style="left:205px;top:146px;width:146px;height:22px;background:#bcc7da"></div><div class="a " style="left:204px;top:168px;width:148px;height:3px;background:#a7b3c9;border-top:1px solid #97a4bc;border-bottom:1px solid #909db6"></div><svg style="left:333px;top:148px" width="16" height="16" viewBox="0 0 16 16"><path d="M1.8 7.2 Q2.5 2.2 7.8 2 Q10.5 2 12 3.8 L13.6 2.2 V7 H8.8 L10.4 5.4 Q9.2 4.2 7.8 4.2 Q4.6 4.4 4 7.2 Z" fill="#f2f4f8" stroke="#8f98aa" stroke-width="0.9" stroke-linejoin="round"/><path d="M14.2 8.8 Q13.5 13.8 8.2 14 Q5.5 14 4 12.2 L2.4 13.8 V9 H7.2 L5.6 10.6 Q6.8 11.8 8.2 11.8 Q11.4 11.6 12 8.8 Z" fill="#f2f4f8" stroke="#8f98aa" stroke-width="0.9" stroke-linejoin="round"/></svg><div class="trow" style="top:171px;height:19px;background:#f6f8fa;overflow:hidden"></div><div class="trow" style="top:190px;height:19px;background:#edf5ed;overflow:hidden"></div><div class="trow" style="top:209px;height:19px;background:#f6f8fa;overflow:hidden"></div><div class="trow" style="top:228px;height:19px;background:#edf5ed;overflow:hidden"></div><div class="trow" style="top:247px;height:19px;background:#f6f8fa;overflow:hidden"></div><div class="trow" style="top:266px;height:19px;background:#edf5ed;overflow:hidden"></div><div class="trow" style="top:285px;height:19px;background:#f6f8fa;overflow:hidden"></div><div class="trow" style="top:304px;height:19px;background:#edf5ed;overflow:hidden"></div><div class="trow" style="top:323px;height:19px;background:#f6f8fa;overflow:hidden"></div><div class="trow" style="top:342px;height:19px;background:#edf5ed;overflow:hidden"></div><div class="trow" style="top:361px;height:19px;background:#f6f8fa;overflow:hidden"></div><div class="trow" style="top:380px;height:19px;background:#edf5ed;overflow:hidden"></div><div class="trow" style="top:399px;height:19px;background:#f6f8fa;overflow:hidden"></div><div class="trow" style="top:418px;height:19px;background:#edf5ed;overflow:hidden"></div><div class="trow" style="top:437px;height:19px;background:#f6f8fa;overflow:hidden"></div><div class="trow" style="top:456px;height:19px;background:#edf5ed;overflow:hidden"></div><div class="trow" style="top:475px;height:14px;background:#f6f8fa;overflow:hidden"></div><div class="a " style="left:214px;top:185px;width:1px;height:92px;border-left:1px dotted #b9c0ce"></div><div class="a " style="left:233px;top:190px;width:1px;height:67px;border-left:1px dotted #b9c0ce"></div><div class="a " style="left:233px;top:285px;width:1px;height:204px;border-left:1px dotted #b9c0ce"></div><svg style="left:210px;top:177px" width="7" height="7" viewBox="0 0 7 7"><path d="M6.5 0.5 V6.5 H0.5 Z" fill="#5a6478"/></svg><div class="a " style="left:218px;top:180px;width:6px;height:1px;border-top:1px dotted #b9c0ce"></div><div class="t " style="left:226.0px;top:175px;letter-spacing:0.69px;font-weight:bold;color:#1b2234;overflow:hidden;">Etykiety (4)</div><div class="a " style="left:234px;top:199px;width:9px;height:1px;border-top:1px dotted #b9c0ce"></div><svg style="left:246px;top:192px" width="15" height="15" viewBox="0 0 15 15">
<path d="M0.8 1.6 Q0.8 0.6 1.8 0.6 H10 Q11 0.6 11 1.6 V10.4 Q11 11.4 10 11.4 H1.8 Q0.8 11.4 0.8 10.4 Z" fill="#fdfdfe" stroke="#8b9bd8" stroke-width="0.9"/>
<path d="M4.2 13.8 L5 11 L11.5 4.5 L13.8 6.8 L7.3 13.3 Z" fill="#f0b23a" stroke="#b17a14" stroke-width="0.6"/>
<path d="M4.2 13.8 L5 11 L7.3 13.3 Z" fill="#4a3a20"/></svg><div class="t " style="left:263.0px;top:194px;letter-spacing:-0.14px;color:#1b2234;max-width:88px;overflow:hidden;">Przekazane do pro</div><div class="a " style="left:234px;top:218px;width:9px;height:1px;border-top:1px dotted #b9c0ce"></div><svg style="left:246px;top:211px" width="15" height="15" viewBox="0 0 15 15">
<path d="M0.8 1.6 Q0.8 0.6 1.8 0.6 H10 Q11 0.6 11 1.6 V10.4 Q11 11.4 10 11.4 H1.8 Q0.8 11.4 0.8 10.4 Z" fill="#fdfdfe" stroke="#8b9bd8" stroke-width="0.9"/>
<path d="M4.2 13.8 L5 11 L11.5 4.5 L13.8 6.8 L7.3 13.3 Z" fill="#f0b23a" stroke="#b17a14" stroke-width="0.6"/>
<path d="M4.2 13.8 L5 11 L7.3 13.3 Z" fill="#4a3a20"/></svg><div class="t " style="left:263.0px;top:213px;letter-spacing:0.22px;color:#1b2234;max-width:88px;overflow:hidden;">123</div><div class="a " style="left:234px;top:237px;width:9px;height:1px;border-top:1px dotted #b9c0ce"></div><svg style="left:246px;top:230px" width="15" height="15" viewBox="0 0 15 15">
<path d="M0.8 1.6 Q0.8 0.6 1.8 0.6 H10 Q11 0.6 11 1.6 V10.4 Q11 11.4 10 11.4 H1.8 Q0.8 11.4 0.8 10.4 Z" fill="#fdfdfe" stroke="#8b9bd8" stroke-width="0.9"/>
<path d="M4.2 13.8 L5 11 L11.5 4.5 L13.8 6.8 L7.3 13.3 Z" fill="#f0b23a" stroke="#b17a14" stroke-width="0.6"/>
<path d="M4.2 13.8 L5 11 L7.3 13.3 Z" fill="#4a3a20"/></svg><div class="t " style="left:263.0px;top:232px;letter-spacing:0.16px;color:#1b2234;max-width:88px;overflow:hidden;">Przyjęto</div><div class="a " style="left:234px;top:256px;width:9px;height:1px;border-top:1px dotted #b9c0ce"></div><svg style="left:246px;top:249px" width="15" height="15" viewBox="0 0 15 15">
<path d="M0.8 1.6 Q0.8 0.6 1.8 0.6 H10 Q11 0.6 11 1.6 V10.4 Q11 11.4 10 11.4 H1.8 Q0.8 11.4 0.8 10.4 Z" fill="#fdfdfe" stroke="#8b9bd8" stroke-width="0.9"/>
<path d="M4.2 13.8 L5 11 L11.5 4.5 L13.8 6.8 L7.3 13.3 Z" fill="#f0b23a" stroke="#b17a14" stroke-width="0.6"/>
<path d="M4.2 13.8 L5 11 L7.3 13.3 Z" fill="#4a3a20"/></svg><div class="t " style="left:263.0px;top:251px;letter-spacing:-0.09px;color:#1b2234;max-width:88px;overflow:hidden;">Zatwierdzono</div><svg style="left:210px;top:272px" width="7" height="7" viewBox="0 0 7 7"><path d="M6.5 0.5 V6.5 H0.5 Z" fill="#5a6478"/></svg><div class="a " style="left:218px;top:275px;width:6px;height:1px;border-top:1px dotted #b9c0ce"></div><div class="t " style="left:226.0px;top:270px;letter-spacing:0.66px;font-weight:bold;color:#1b2234;overflow:hidden;">Trasy (16)</div><div class="a " style="left:234px;top:294px;width:9px;height:1px;border-top:1px dotted #b9c0ce"></div><svg style="left:246px;top:287px" width="15" height="15" viewBox="0 0 15 15">
<path d="M0.8 1.6 Q0.8 0.6 1.8 0.6 H10 Q11 0.6 11 1.6 V10.4 Q11 11.4 10 11.4 H1.8 Q0.8 11.4 0.8 10.4 Z" fill="#fdfdfe" stroke="#8b9bd8" stroke-width="0.9"/>
<path d="M4.2 13.8 L5 11 L11.5 4.5 L13.8 6.8 L7.3 13.3 Z" fill="#f0b23a" stroke="#b17a14" stroke-width="0.6"/>
<path d="M4.2 13.8 L5 11 L7.3 13.3 Z" fill="#4a3a20"/></svg><div class="t " style="left:263.0px;top:289px;letter-spacing:0.11px;color:#1b2234;max-width:88px;overflow:hidden;">Kurier</div><div class="a " style="left:234px;top:313px;width:9px;height:1px;border-top:1px dotted #b9c0ce"></div><svg style="left:246px;top:306px" width="15" height="15" viewBox="0 0 15 15">
<path d="M0.8 1.6 Q0.8 0.6 1.8 0.6 H10 Q11 0.6 11 1.6 V10.4 Q11 11.4 10 11.4 H1.8 Q0.8 11.4 0.8 10.4 Z" fill="#fdfdfe" stroke="#8b9bd8" stroke-width="0.9"/>
<path d="M4.2 13.8 L5 11 L11.5 4.5 L13.8 6.8 L7.3 13.3 Z" fill="#f0b23a" stroke="#b17a14" stroke-width="0.6"/>
<path d="M4.2 13.8 L5 11 L7.3 13.3 Z" fill="#4a3a20"/></svg><div class="t " style="left:263.0px;top:308px;letter-spacing:-0.10px;color:#1b2234;max-width:88px;overflow:hidden;">Odbior osobisty</div><div class="a " style="left:234px;top:332px;width:9px;height:1px;border-top:1px dotted #b9c0ce"></div><svg style="left:246px;top:325px" width="15" height="15" viewBox="0 0 15 15">
<path d="M0.8 1.6 Q0.8 0.6 1.8 0.6 H10 Q11 0.6 11 1.6 V10.4 Q11 11.4 10 11.4 H1.8 Q0.8 11.4 0.8 10.4 Z" fill="#fdfdfe" stroke="#8b9bd8" stroke-width="0.9"/>
<path d="M4.2 13.8 L5 11 L11.5 4.5 L13.8 6.8 L7.3 13.3 Z" fill="#f0b23a" stroke="#b17a14" stroke-width="0.6"/>
<path d="M4.2 13.8 L5 11 L7.3 13.3 Z" fill="#4a3a20"/></svg><div class="t " style="left:263.0px;top:327px;letter-spacing:-0.20px;color:#1b2234;max-width:88px;overflow:hidden;">Kraków- Rzeszów</div><div class="a " style="left:234px;top:351px;width:9px;height:1px;border-top:1px dotted #b9c0ce"></div><svg style="left:246px;top:344px" width="15" height="15" viewBox="0 0 15 15">
<path d="M0.8 1.6 Q0.8 0.6 1.8 0.6 H10 Q11 0.6 11 1.6 V10.4 Q11 11.4 10 11.4 H1.8 Q0.8 11.4 0.8 10.4 Z" fill="#fdfdfe" stroke="#8b9bd8" stroke-width="0.9"/>
<path d="M4.2 13.8 L5 11 L11.5 4.5 L13.8 6.8 L7.3 13.3 Z" fill="#f0b23a" stroke="#b17a14" stroke-width="0.6"/>
<path d="M4.2 13.8 L5 11 L7.3 13.3 Z" fill="#4a3a20"/></svg><div class="t " style="left:263.0px;top:346px;letter-spacing:-0.09px;color:#1b2234;max-width:88px;overflow:hidden;">Kraków-Jasło</div><div class="a " style="left:234px;top:370px;width:9px;height:1px;border-top:1px dotted #b9c0ce"></div><svg style="left:246px;top:363px" width="15" height="15" viewBox="0 0 15 15">
<path d="M0.8 1.6 Q0.8 0.6 1.8 0.6 H10 Q11 0.6 11 1.6 V10.4 Q11 11.4 10 11.4 H1.8 Q0.8 11.4 0.8 10.4 Z" fill="#fdfdfe" stroke="#8b9bd8" stroke-width="0.9"/>
<path d="M4.2 13.8 L5 11 L11.5 4.5 L13.8 6.8 L7.3 13.3 Z" fill="#f0b23a" stroke="#b17a14" stroke-width="0.6"/>
<path d="M4.2 13.8 L5 11 L7.3 13.3 Z" fill="#4a3a20"/></svg><div class="t " style="left:263.0px;top:365px;letter-spacing:-0.24px;color:#1b2234;max-width:88px;overflow:hidden;">Kraków-Wieliczka</div><div class="a " style="left:234px;top:389px;width:9px;height:1px;border-top:1px dotted #b9c0ce"></div><svg style="left:246px;top:382px" width="15" height="15" viewBox="0 0 15 15">
<path d="M0.8 1.6 Q0.8 0.6 1.8 0.6 H10 Q11 0.6 11 1.6 V10.4 Q11 11.4 10 11.4 H1.8 Q0.8 11.4 0.8 10.4 Z" fill="#fdfdfe" stroke="#8b9bd8" stroke-width="0.9"/>
<path d="M4.2 13.8 L5 11 L11.5 4.5 L13.8 6.8 L7.3 13.3 Z" fill="#f0b23a" stroke="#b17a14" stroke-width="0.6"/>
<path d="M4.2 13.8 L5 11 L7.3 13.3 Z" fill="#4a3a20"/></svg><div class="t " style="left:263.0px;top:384px;letter-spacing:-0.20px;color:#1b2234;max-width:88px;overflow:hidden;">Kraków- Skawina</div><div class="a " style="left:234px;top:408px;width:9px;height:1px;border-top:1px dotted #b9c0ce"></div><svg style="left:246px;top:401px" width="15" height="15" viewBox="0 0 15 15">
<path d="M0.8 1.6 Q0.8 0.6 1.8 0.6 H10 Q11 0.6 11 1.6 V10.4 Q11 11.4 10 11.4 H1.8 Q0.8 11.4 0.8 10.4 Z" fill="#fdfdfe" stroke="#8b9bd8" stroke-width="0.9"/>
<path d="M4.2 13.8 L5 11 L11.5 4.5 L13.8 6.8 L7.3 13.3 Z" fill="#f0b23a" stroke="#b17a14" stroke-width="0.6"/>
<path d="M4.2 13.8 L5 11 L7.3 13.3 Z" fill="#4a3a20"/></svg><div class="t " style="left:263.0px;top:403px;letter-spacing:-0.20px;color:#1b2234;max-width:88px;overflow:hidden;">Kraków-Katowice</div><div class="a " style="left:234px;top:427px;width:9px;height:1px;border-top:1px dotted #b9c0ce"></div><svg style="left:246px;top:420px" width="15" height="15" viewBox="0 0 15 15">
<path d="M0.8 1.6 Q0.8 0.6 1.8 0.6 H10 Q11 0.6 11 1.6 V10.4 Q11 11.4 10 11.4 H1.8 Q0.8 11.4 0.8 10.4 Z" fill="#fdfdfe" stroke="#8b9bd8" stroke-width="0.9"/>
<path d="M4.2 13.8 L5 11 L11.5 4.5 L13.8 6.8 L7.3 13.3 Z" fill="#f0b23a" stroke="#b17a14" stroke-width="0.6"/>
<path d="M4.2 13.8 L5 11 L7.3 13.3 Z" fill="#4a3a20"/></svg><div class="t " style="left:263.0px;top:422px;letter-spacing:-0.09px;color:#1b2234;max-width:88px;overflow:hidden;">Kraków-Wrocław</div><div class="a " style="left:234px;top:446px;width:9px;height:1px;border-top:1px dotted #b9c0ce"></div><svg style="left:246px;top:439px" width="15" height="15" viewBox="0 0 15 15">
<path d="M0.8 1.6 Q0.8 0.6 1.8 0.6 H10 Q11 0.6 11 1.6 V10.4 Q11 11.4 10 11.4 H1.8 Q0.8 11.4 0.8 10.4 Z" fill="#fdfdfe" stroke="#8b9bd8" stroke-width="0.9"/>
<path d="M4.2 13.8 L5 11 L11.5 4.5 L13.8 6.8 L7.3 13.3 Z" fill="#f0b23a" stroke="#b17a14" stroke-width="0.6"/>
<path d="M4.2 13.8 L5 11 L7.3 13.3 Z" fill="#4a3a20"/></svg><div class="t " style="left:263.0px;top:441px;letter-spacing:0.05px;color:#1b2234;max-width:88px;overflow:hidden;">Kraków- Wałbrzyc</div><div class="a " style="left:234px;top:465px;width:9px;height:1px;border-top:1px dotted #b9c0ce"></div><svg style="left:246px;top:458px" width="15" height="15" viewBox="0 0 15 15">
<path d="M0.8 1.6 Q0.8 0.6 1.8 0.6 H10 Q11 0.6 11 1.6 V10.4 Q11 11.4 10 11.4 H1.8 Q0.8 11.4 0.8 10.4 Z" fill="#fdfdfe" stroke="#8b9bd8" stroke-width="0.9"/>
<path d="M4.2 13.8 L5 11 L11.5 4.5 L13.8 6.8 L7.3 13.3 Z" fill="#f0b23a" stroke="#b17a14" stroke-width="0.6"/>
<path d="M4.2 13.8 L5 11 L7.3 13.3 Z" fill="#4a3a20"/></svg><div class="t " style="left:263.0px;top:460px;letter-spacing:-0.20px;color:#1b2234;max-width:88px;overflow:hidden;">Kraków-Poznań</div><div class="a " style="left:234px;top:484px;width:9px;height:1px;border-top:1px dotted #b9c0ce"></div><svg style="clip-path:inset(0 0 3px 0);left:246px;top:477px" width="15" height="15" viewBox="0 0 15 15">
<path d="M0.8 1.6 Q0.8 0.6 1.8 0.6 H10 Q11 0.6 11 1.6 V10.4 Q11 11.4 10 11.4 H1.8 Q0.8 11.4 0.8 10.4 Z" fill="#fdfdfe" stroke="#8b9bd8" stroke-width="0.9"/>
<path d="M4.2 13.8 L5 11 L11.5 4.5 L13.8 6.8 L7.3 13.3 Z" fill="#f0b23a" stroke="#b17a14" stroke-width="0.6"/>
<path d="M4.2 13.8 L5 11 L7.3 13.3 Z" fill="#4a3a20"/></svg><div class="t " style="left:263.0px;top:479px;letter-spacing:-0.13px;color:#1b2234;max-width:88px;overflow:hidden;clip-path:inset(0 0 3px 0);">Kraków-Poznań2</div><!-- s50_grid -->
<div class="a " style="left:361px;top:143px;width:1134px;height:35px;background:#c7d0e2"></div><div class="t " style="left:368.0px;top:155px;letter-spacing:-0.13px;color:#a3aec6;">Panel grupowania</div><div class="a " style="left:361px;top:178px;width:1134px;height:19px;background:linear-gradient(180deg,#f0f2f6 0,#e9ecf2 48%,#dde2eb 52%,#dfe4ec 100%);border-top:1px solid #aeb8ca"></div><div class="a " style="left:372px;top:179px;width:2px;height:18px;background:linear-gradient(90deg,#c3cbda,#f6f8fb)"></div><div class="a " style="left:471px;top:179px;width:2px;height:18px;background:linear-gradient(90deg,#c3cbda,#f6f8fb)"></div><div class="a " style="left:551px;top:179px;width:2px;height:18px;background:linear-gradient(90deg,#c3cbda,#f6f8fb)"></div><div class="a " style="left:897px;top:179px;width:2px;height:18px;background:linear-gradient(90deg,#c3cbda,#f6f8fb)"></div><div class="a " style="left:997px;top:179px;width:2px;height:18px;background:linear-gradient(90deg,#c3cbda,#f6f8fb)"></div><div class="a " style="left:1097px;top:179px;width:2px;height:18px;background:linear-gradient(90deg,#c3cbda,#f6f8fb)"></div><div class="a " style="left:1197px;top:179px;width:2px;height:18px;background:linear-gradient(90deg,#c3cbda,#f6f8fb)"></div><div class="a " style="left:1302px;top:179px;width:2px;height:18px;background:linear-gradient(90deg,#c3cbda,#f6f8fb)"></div><div class="a " style="left:1350px;top:179px;width:2px;height:18px;background:linear-gradient(90deg,#c3cbda,#f6f8fb)"></div><div class="a " style="left:1426px;top:179px;width:2px;height:18px;background:linear-gradient(90deg,#c3cbda,#f6f8fb)"></div><div class="t " style="left:363.0px;top:181px;font-size:9px;color:#222;">✻</div><div class="t " style="left:375.0px;top:182px;letter-spacing:-0.03px;color:#3a4662;">Nr własny</div><div class="t " style="left:475.0px;top:182px;letter-spacing:0.05px;color:#3a4662;">Data wystaw…</div><div class="t " style="left:555.0px;top:182px;letter-spacing:-0.20px;color:#3a4662;">Zamawiający</div><div class="t " style="left:999.0px;top:182px;color:#3a4662;">Zarezerwowano</div><div class="t " style="left:1099.0px;top:182px;letter-spacing:-0.21px;color:#3a4662;">Dostępność</div><div class="t " style="left:1199.0px;top:182px;letter-spacing:-0.05px;color:#3a4662;">Wartość netto PLN</div><div class="t " style="left:1305.0px;top:182px;letter-spacing:-0.13px;color:#3a4662;">Nr obcy</div><div class="t " style="left:1353.0px;top:182px;letter-spacing:-0.04px;color:#3a4662;">Faktura Pro …</div><div class="t " style="left:1429.0px;top:182px;letter-spacing:-0.31px;color:#3a4662;">Uwagi</div><div class="t " style="left:900.0px;top:182px;letter-spacing:-0.24px;color:#3a4662;">Zrealizowano</div><div class="a " style="left:361px;top:197px;width:1134px;height:19px;background:#eef6ee"></div><div class="a " style="left:361px;top:197px;width:12px;height:19px;background:#e4e9f1"></div><svg style="left:364px;top:203px" width="6" height="8" viewBox="0 0 6 8"><circle cx="3" cy="2.5" r="2.4" fill="#111"/><circle cx="2.4" cy="1.9" r="0.8" fill="#ddd"/><path d="M3 4.5 V8" stroke="#111" stroke-width="1.3"/></svg><div class="t " style="left:885.0px;top:201px;letter-spacing:-0.04px;color:#6a748a;">kliknij aby dodać filtr</div><div class="a " style="left:361px;top:216px;width:1134px;height:2px;background:linear-gradient(180deg,#aeb8ca,#8792ab)"></div><div class="gr" style="top:218px;background:#f6f7fa"></div><div class="a " style="left:361px;top:218px;width:12px;height:19px;background:#e1e6ee;border-bottom:1px solid #cfd6e2"></div><div class="t " style="left:375.0px;top:222px;letter-spacing:-0.17px;color:#15192a;">ZO 00001/PR/2024</div><div class="t " style="left:475.0px;top:222px;letter-spacing:0.09px;color:#15192a;">31.10.2024</div><div class="t " style="left:555.0px;top:222px;letter-spacing:-0.18px;color:#15192a;">Odbiorca 2</div><div class="pc" style="left:897px;top:218px"></div><div class="t " style="left:938.0px;top:222px;color:#15192a;">0 %</div><div class="pc" style="left:997px;top:218px"></div><div class="t " style="left:1038.0px;top:222px;color:#15192a;">0 %</div><div class="pc" style="left:1097px;top:218px"></div><div class="t " style="left:1138.0px;top:222px;color:#15192a;">0 %</div><div class="t " style="left:1267.0px;top:222px;letter-spacing:0.06px;color:#15192a;">867,00</div><div class="gr" style="top:237px;background:#edf4ec"></div><div class="a " style="left:361px;top:237px;width:12px;height:19px;background:#e1e6ee;border-bottom:1px solid #cfd6e2"></div><div class="t " style="left:375.0px;top:241px;letter-spacing:-0.17px;color:#15192a;">ZO 00002/PR/2024</div><div class="t " style="left:475.0px;top:241px;letter-spacing:0.09px;color:#15192a;">31.10.2024</div><div class="t " style="left:555.0px;top:241px;letter-spacing:-0.18px;color:#15192a;">Odbiorca 2</div><div class="pc" style="left:897px;top:237px"></div><div class="t " style="left:938.0px;top:241px;color:#15192a;">0 %</div><div class="pc" style="left:997px;top:237px"></div><div class="t " style="left:1038.0px;top:241px;color:#15192a;">0 %</div><div class="pc" style="left:1097px;top:237px"></div><div class="t " style="left:1138.0px;top:241px;color:#15192a;">0 %</div><div class="t " style="left:1267.0px;top:241px;letter-spacing:0.06px;color:#15192a;">200,00</div><div class="gr" style="top:256px;background:#f6f7fa"></div><div class="a " style="left:361px;top:256px;width:12px;height:19px;background:#e1e6ee;border-bottom:1px solid #cfd6e2"></div><div class="t " style="left:375.0px;top:260px;letter-spacing:-0.17px;color:#15192a;">ZO 00001/PR/2022</div><div class="t " style="left:475.0px;top:260px;letter-spacing:0.09px;color:#15192a;">20.01.2022</div><div class="t " style="left:555.0px;top:260px;letter-spacing:-0.76px;color:#15192a;">!NIEOKREŚLONY</div><div class="pc" style="left:897px;top:256px"></div><div class="t " style="left:938.0px;top:260px;color:#15192a;">0 %</div><div class="pc" style="left:997px;top:256px"></div><div class="t " style="left:1038.0px;top:260px;color:#15192a;">0 %</div><div class="pc" style="left:1097px;top:256px"></div><div class="t " style="left:1138.0px;top:260px;color:#15192a;">0 %</div><div class="t " style="left:1279.0px;top:260px;letter-spacing:0.15px;color:#15192a;">0,00</div><div class="gr" style="top:275px;background:#edf4ec"></div><div class="a " style="left:361px;top:275px;width:12px;height:19px;background:#e1e6ee;border-bottom:1px solid #cfd6e2"></div><div class="t " style="left:375.0px;top:279px;letter-spacing:-0.17px;color:#15192a;">ZO 00002/PR/2022</div><div class="t " style="left:475.0px;top:279px;letter-spacing:0.09px;color:#15192a;">20.01.2022</div><div class="t " style="left:555.0px;top:279px;letter-spacing:-0.76px;color:#15192a;">!NIEOKREŚLONY</div><div class="pc" style="left:897px;top:275px"></div><div class="t " style="left:938.0px;top:279px;color:#15192a;">0 %</div><div class="pc" style="left:997px;top:275px"></div><div class="t " style="left:1038.0px;top:279px;color:#15192a;">0 %</div><div class="pc" style="left:1097px;top:275px"></div><div class="t " style="left:1138.0px;top:279px;color:#15192a;">0 %</div><div class="t " style="left:1279.0px;top:279px;letter-spacing:0.15px;color:#15192a;">0,00</div><div class="gr" style="top:294px;background:#f6f7fa"></div><div class="a " style="left:361px;top:294px;width:12px;height:19px;background:#e1e6ee;border-bottom:1px solid #cfd6e2"></div><div class="t " style="left:375.0px;top:298px;letter-spacing:-0.17px;color:#15192a;">ZO 00003/PR/2022</div><div class="t " style="left:475.0px;top:298px;letter-spacing:0.09px;color:#15192a;">20.01.2022</div><div class="t " style="left:555.0px;top:298px;letter-spacing:-0.76px;color:#15192a;">!NIEOKREŚLONY</div><div class="pc" style="left:897px;top:294px"></div><div class="t " style="left:938.0px;top:298px;color:#15192a;">0 %</div><div class="pc" style="left:997px;top:294px"></div><div class="t " style="left:1038.0px;top:298px;color:#15192a;">0 %</div><div class="pc" style="left:1097px;top:294px"></div><div class="t " style="left:1138.0px;top:298px;color:#15192a;">0 %</div><div class="t " style="left:1279.0px;top:298px;letter-spacing:0.15px;color:#15192a;">0,00</div><div class="gr" style="top:313px;background:#fef5e1"></div><div class="a " style="left:361px;top:313px;width:12px;height:19px;background:#e1e6ee;border-bottom:1px solid #cfd6e2"></div><svg style="left:364px;top:319px" width="5" height="7" viewBox="0 0 5 7"><path d="M0 0 L5 3.5 L0 7 Z" fill="#111"/></svg><div class="t " style="left:375.0px;top:317px;letter-spacing:-0.17px;color:#15192a;">ZO 00018/PR/2021</div><div class="t " style="left:475.0px;top:317px;letter-spacing:0.09px;color:#15192a;">09.08.2021</div><div class="t " style="left:555.0px;top:317px;letter-spacing:-0.18px;color:#15192a;">Odbiorca 1</div><svg style="left:708px;top:314px" width="13" height="15" viewBox="0 0 13 15">
<rect x="0.6" y="2.2" width="11.8" height="12.2" rx="1.2" fill="#f6c35a" stroke="#c98414" stroke-width="1"/>
<rect x="2.4" y="4" width="8.2" height="8.6" fill="#fdf6df"/>
<rect x="4" y="0.8" width="5" height="2.6" rx="0.8" fill="#8c6a2a"/>
<path d="M3 7.5 L5.6 10.6 L11.6 2.2" fill="none" stroke="#1fa81f" stroke-width="2"/></svg><div class="t " style="left:725.0px;top:317px;letter-spacing:0.05px;color:#15192a;">Zatwierdzony</div><div class="t " style="left:799.0px;top:317px;letter-spacing:0.09px;color:#15192a;">09.08.2021</div><div class="pc" style="left:897px;top:313px"></div><div class="t " style="left:938.0px;top:317px;color:#15192a;">0 %</div><div class="pc" style="left:997px;top:313px"></div><div class="pg" style="left:998px;top:314px;width:99px"></div><div class="t " style="left:1031.9px;top:317px;color:#15192a;">100 %</div><div class="pc" style="left:1097px;top:313px"></div><div class="t " style="left:1138.0px;top:317px;color:#15192a;">0 %</div><div class="t " style="left:1267.0px;top:317px;letter-spacing:0.06px;color:#15192a;">447,32</div><div class="gr" style="top:332px;background:#f6f7fa"></div><div class="a " style="left:361px;top:332px;width:12px;height:19px;background:#e1e6ee;border-bottom:1px solid #cfd6e2"></div><div class="t " style="left:375.0px;top:336px;letter-spacing:-0.17px;color:#15192a;">ZO 00017/PR/2021</div><div class="t " style="left:475.0px;top:336px;letter-spacing:0.09px;color:#15192a;">04.08.2021</div><div class="t " style="left:555.0px;top:336px;letter-spacing:-0.18px;color:#15192a;">Odbiorca 1</div><svg style="left:708px;top:333px" width="13" height="15" viewBox="0 0 13 15">
<rect x="0.6" y="2.2" width="11.8" height="12.2" rx="1.2" fill="#f6c35a" stroke="#c98414" stroke-width="1"/>
<rect x="2.4" y="4" width="8.2" height="8.6" fill="#fdf6df"/>
<rect x="4" y="0.8" width="5" height="2.6" rx="0.8" fill="#8c6a2a"/>
<path d="M3 7.5 L5.6 10.6 L11.6 2.2" fill="none" stroke="#1fa81f" stroke-width="2"/></svg><div class="t " style="left:725.0px;top:336px;letter-spacing:0.05px;color:#15192a;">Zatwierdzony</div><div class="t " style="left:799.0px;top:336px;letter-spacing:0.09px;color:#15192a;">04.08.2021</div><div class="pc" style="left:897px;top:332px"></div><div class="pg" style="left:898px;top:333px;width:50px"></div><div class="t " style="left:935.0px;top:336px;color:#15192a;">50 %</div><div class="pc" style="left:997px;top:332px"></div><div class="t " style="left:1038.0px;top:336px;color:#15192a;">0 %</div><div class="pc" style="left:1097px;top:332px"></div><div class="pg" style="left:1098px;top:333px;width:99px"></div><div class="t " style="left:1131.9px;top:336px;color:#15192a;">100 %</div><div class="t " style="left:1273.0px;top:336px;letter-spacing:0.09px;color:#15192a;">44,73</div><div class="gr" style="top:351px;background:#edf4ec"></div><div class="a " style="left:361px;top:351px;width:12px;height:19px;background:#e1e6ee;border-bottom:1px solid #cfd6e2"></div><div class="t " style="left:375.0px;top:355px;letter-spacing:-0.17px;color:#15192a;">ZO 00015/PR/2021</div><div class="t " style="left:475.0px;top:355px;letter-spacing:0.09px;color:#15192a;">13.07.2021</div><div class="t " style="left:555.0px;top:355px;letter-spacing:-0.25px;color:#15192a;">Dostawca 4</div><svg style="left:708px;top:352px" width="13" height="15" viewBox="0 0 13 15">
<rect x="0.6" y="2.2" width="11.8" height="12.2" rx="1.2" fill="#f6c35a" stroke="#c98414" stroke-width="1"/>
<rect x="2.4" y="4" width="8.2" height="8.6" fill="#fdf6df"/>
<rect x="4" y="0.8" width="5" height="2.6" rx="0.8" fill="#8c6a2a"/>
<path d="M3 7.5 L5.6 10.6 L11.6 2.2" fill="none" stroke="#1fa81f" stroke-width="2"/></svg><div class="t " style="left:725.0px;top:355px;letter-spacing:0.05px;color:#15192a;">Zatwierdzony</div><div class="t " style="left:799.0px;top:355px;letter-spacing:0.09px;color:#15192a;">13.07.2021</div><div class="pc" style="left:897px;top:351px"></div><div class="t " style="left:938.0px;top:355px;color:#15192a;">0 %</div><div class="pc" style="left:997px;top:351px"></div><div class="t " style="left:1038.0px;top:355px;color:#15192a;">0 %</div><div class="pc" style="left:1097px;top:351px"></div><div class="t " style="left:1138.0px;top:355px;color:#15192a;">0 %</div><div class="t " style="left:1258.0px;top:355px;letter-spacing:0.02px;color:#15192a;">1 230,00</div><div class="gr" style="top:370px;background:#f6f7fa"></div><div class="a " style="left:361px;top:370px;width:12px;height:19px;background:#e1e6ee;border-bottom:1px solid #cfd6e2"></div><div class="t " style="left:375.0px;top:374px;letter-spacing:-0.17px;color:#15192a;">ZO 00016/PR/2021</div><div class="t " style="left:475.0px;top:374px;letter-spacing:0.09px;color:#15192a;">13.07.2021</div><div class="t " style="left:555.0px;top:374px;letter-spacing:-0.25px;color:#15192a;">Dostawca 4</div><svg style="left:708px;top:371px" width="13" height="15" viewBox="0 0 13 15">
<rect x="0.6" y="2.2" width="11.8" height="12.2" rx="1.2" fill="#f6c35a" stroke="#c98414" stroke-width="1"/>
<rect x="2.4" y="4" width="8.2" height="8.6" fill="#fdf6df"/>
<rect x="4" y="0.8" width="5" height="2.6" rx="0.8" fill="#8c6a2a"/>
<path d="M3 7.5 L5.6 10.6 L11.6 2.2" fill="none" stroke="#1fa81f" stroke-width="2"/></svg><div class="t " style="left:725.0px;top:374px;letter-spacing:0.05px;color:#15192a;">Zatwierdzony</div><div class="t " style="left:799.0px;top:374px;letter-spacing:0.09px;color:#15192a;">13.07.2021</div><div class="pc" style="left:897px;top:370px"></div><div class="t " style="left:938.0px;top:374px;color:#15192a;">0 %</div><div class="pc" style="left:997px;top:370px"></div><div class="t " style="left:1038.0px;top:374px;color:#15192a;">0 %</div><div class="pc" style="left:1097px;top:370px"></div><div class="t " style="left:1138.0px;top:374px;color:#15192a;">0 %</div><div class="t " style="left:1279.0px;top:374px;letter-spacing:0.15px;color:#15192a;">0,00</div><div class="gr" style="top:389px;background:#edf4ec"></div><div class="a " style="left:361px;top:389px;width:12px;height:19px;background:#e1e6ee;border-bottom:1px solid #cfd6e2"></div><div class="t " style="left:375.0px;top:393px;letter-spacing:-0.17px;color:#15192a;">ZO 00013/PR/2021</div><div class="t " style="left:475.0px;top:393px;letter-spacing:0.09px;color:#15192a;">09.07.2021</div><div class="t " style="left:555.0px;top:393px;letter-spacing:-0.18px;color:#15192a;">Odbiorca 1</div><svg style="left:708px;top:390px" width="13" height="15" viewBox="0 0 13 15">
<rect x="0.6" y="2.2" width="11.8" height="12.2" rx="1.2" fill="#f6c35a" stroke="#c98414" stroke-width="1"/>
<rect x="2.4" y="4" width="8.2" height="8.6" fill="#fdf6df"/>
<rect x="4" y="0.8" width="5" height="2.6" rx="0.8" fill="#8c6a2a"/>
<path d="M3 7.5 L5.6 10.6 L11.6 2.2" fill="none" stroke="#1fa81f" stroke-width="2"/></svg><div class="t " style="left:725.0px;top:393px;letter-spacing:0.05px;color:#15192a;">Zatwierdzony</div><div class="t " style="left:799.0px;top:393px;letter-spacing:0.09px;color:#15192a;">09.07.2021</div><div class="pc" style="left:897px;top:389px"></div><div class="t " style="left:938.0px;top:393px;color:#15192a;">0 %</div><div class="pc" style="left:997px;top:389px"></div><div class="t " style="left:1038.0px;top:393px;color:#15192a;">0 %</div><div class="pc" style="left:1097px;top:389px"></div><div class="pg" style="left:1098px;top:390px;width:99px"></div><div class="t " style="left:1131.9px;top:393px;color:#15192a;">100 %</div><div class="t " style="left:1258.0px;top:393px;letter-spacing:0.02px;color:#15192a;">2 236,60</div><div class="gr" style="top:408px;background:#f6f7fa"></div><div class="a " style="left:361px;top:408px;width:12px;height:19px;background:#e1e6ee;border-bottom:1px solid #cfd6e2"></div><div class="t " style="left:375.0px;top:412px;letter-spacing:-0.17px;color:#15192a;">ZO 00009/PR/2021</div><div class="t " style="left:475.0px;top:412px;letter-spacing:0.09px;color:#15192a;">06.07.2021</div><div class="t " style="left:555.0px;top:412px;letter-spacing:-0.25px;color:#15192a;">Dostawca 2</div><svg style="left:708px;top:409px" width="13" height="15" viewBox="0 0 13 15">
<rect x="0.6" y="2.2" width="11.8" height="12.2" rx="1.2" fill="#f6c35a" stroke="#c98414" stroke-width="1"/>
<rect x="2.4" y="4" width="8.2" height="8.6" fill="#fdf6df"/>
<rect x="4" y="0.8" width="5" height="2.6" rx="0.8" fill="#8c6a2a"/>
<path d="M3 7.5 L5.6 10.6 L11.6 2.2" fill="none" stroke="#1fa81f" stroke-width="2"/></svg><div class="t " style="left:725.0px;top:412px;letter-spacing:0.05px;color:#15192a;">Zatwierdzony</div><div class="t " style="left:799.0px;top:412px;letter-spacing:0.09px;color:#15192a;">06.07.2021</div><div class="pc" style="left:897px;top:408px"></div><div class="t " style="left:938.0px;top:412px;color:#15192a;">0 %</div><div class="pc" style="left:997px;top:408px"></div><div class="t " style="left:1038.0px;top:412px;color:#15192a;">0 %</div><div class="pc" style="left:1097px;top:408px"></div><div class="t " style="left:1138.0px;top:412px;color:#15192a;">0 %</div><div class="t " style="left:1252.0px;top:412px;color:#15192a;">10 000,00</div><div class="gr" style="top:427px;background:#edf4ec"></div><div class="a " style="left:361px;top:427px;width:12px;height:19px;background:#e1e6ee;border-bottom:1px solid #cfd6e2"></div><div class="t " style="left:375.0px;top:431px;letter-spacing:-0.12px;color:#15192a;">ZO 00011/PR/2021</div><div class="t " style="left:475.0px;top:431px;letter-spacing:0.09px;color:#15192a;">06.07.2021</div><div class="t " style="left:555.0px;top:431px;letter-spacing:-0.25px;color:#15192a;">Dostawca 2</div><svg style="left:708px;top:428px" width="13" height="15" viewBox="0 0 13 15">
<rect x="0.6" y="2.2" width="11.8" height="12.2" rx="1.2" fill="#f6c35a" stroke="#c98414" stroke-width="1"/>
<rect x="2.4" y="4" width="8.2" height="8.6" fill="#fdf6df"/>
<rect x="4" y="0.8" width="5" height="2.6" rx="0.8" fill="#8c6a2a"/>
<path d="M3 7.5 L5.6 10.6 L11.6 2.2" fill="none" stroke="#1fa81f" stroke-width="2"/></svg><div class="t " style="left:725.0px;top:431px;letter-spacing:0.05px;color:#15192a;">Zatwierdzony</div><div class="t " style="left:799.0px;top:431px;letter-spacing:0.09px;color:#15192a;">06.07.2021</div><div class="pc" style="left:897px;top:427px"></div><div class="t " style="left:938.0px;top:431px;color:#15192a;">0 %</div><div class="pc" style="left:997px;top:427px"></div><div class="t " style="left:1038.0px;top:431px;color:#15192a;">0 %</div><div class="pc" style="left:1097px;top:427px"></div><div class="t " style="left:1138.0px;top:431px;color:#15192a;">0 %</div><div class="t " style="left:1252.0px;top:431px;color:#15192a;">10 000,00</div><svg style="left:1383px;top:333px" width="15" height="16" viewBox="0 0 15 16"><circle cx="5" cy="5" r="3.6" fill="#fbe3c0" stroke="#e07a1a" stroke-width="1"/><path d="M3.6 6.5 V3.5 H6 M3.6 5 H5.5" stroke="#d0401a" stroke-width="0.9" fill="none"/><circle cx="9.5" cy="10.5" r="4.6" fill="#8cc63a" stroke="#c9a21a" stroke-width="1.2"/><path d="M11 8.8 Q9.5 7.8 8.4 8.8 Q7.8 10 9.5 10.5 Q11.2 11 10.6 12.2 Q9.5 13.2 8 12.2 M9.5 7.4 V13.6" stroke="#1a3a0a" stroke-width="0.9" fill="none"/></svg><div class="a " style="left:361px;top:443px;width:1134px;height:34px;background:linear-gradient(180deg,#f0f2f6,#dce1ea);border-top:1px solid #b7c0d0"></div><div class="a " style="left:375px;top:446px;width:96px;height:27px;background:#fff;border:1px solid #c3cad8;border-radius:2px"></div><div class="t " style="left:386.0px;top:454px;letter-spacing:-0.18px;color:#15192a;">186 pozycji</div><div class="a " style="left:1200px;top:446px;width:102px;height:27px;background:#fff;border:1px solid #c3cad8;border-radius:2px"></div><div class="t " style="left:1233.0px;top:454px;color:#15192a;">6658 469,10</div><div class="a " style="left:361px;top:477px;width:1134px;height:15px;background:#dfe4ed"></div><svg style="left:366px;top:481px" width="5" height="7" viewBox="0 0 5 7"><path d="M5 0 L0 3.5 L5 7 Z" fill="#9aa3b5"/></svg><svg style="left:1484px;top:481px" width="5" height="7" viewBox="0 0 5 7"><path d="M0 0 L5 3.5 L0 7 Z" fill="#9aa3b5"/></svg><div class="a " style="left:378px;top:478px;width:412px;height:13px;background:linear-gradient(180deg,#f3f5f9,#d8dee9);border:1px solid #a4aec1;border-radius:2px"></div><div class="a " style="left:581px;top:481px;width:7px;height:7px;border-left:1px solid #59627a;border-right:1px solid #59627a"></div><div class="a " style="left:584px;top:481px;width:1px;height:7px;background:#59627a"></div><div class="a " style="left:1496px;top:143px;width:16px;height:334px;background:linear-gradient(90deg,#dfe3ea,#eceef2 30%,#e6e9ee)"></div><svg style="left:1500px;top:149px" width="7" height="4" viewBox="0 0 7 5"><path d="M0 5 L3.5 0 L7 5 Z" fill="#9aa3b5"/></svg><svg style="left:1500px;top:466px" width="7" height="4" viewBox="0 0 7 5"><path d="M0 0 L3.5 5 L7 0 Z" fill="#9aa3b5"/></svg><div class="a " style="left:1496px;top:160px;width:15px;height:18px;background:linear-gradient(90deg,#fbfcfd,#d5dbe6);border:1px solid #a4aec1;border-radius:2px;box-shadow:inset 0 0 0 1px #fff"></div><div class="a " style="left:1500px;top:165px;width:7px;height:1px;background:#59627a"></div><div class="a " style="left:1500px;top:168px;width:7px;height:1px;background:#59627a"></div><div class="a " style="left:1500px;top:171px;width:7px;height:1px;background:#59627a"></div><!-- s60_bottom -->
<div class="a " style="left:850px;top:495px;width:2px;height:2px;background:#6f7fa8"></div><div class="a " style="left:854px;top:495px;width:2px;height:2px;background:#6f7fa8"></div><div class="a " style="left:858px;top:495px;width:2px;height:2px;background:#6f7fa8"></div><div class="a " style="left:862px;top:495px;width:2px;height:2px;background:#6f7fa8"></div><div class="a " style="left:195px;top:370px;width:2px;height:2px;background:#6f7fa8"></div><div class="a " style="left:195px;top:374px;width:2px;height:2px;background:#6f7fa8"></div><div class="a " style="left:195px;top:378px;width:2px;height:2px;background:#6f7fa8"></div><div class="a " style="left:195px;top:382px;width:2px;height:2px;background:#6f7fa8"></div><div class="a " style="left:201px;top:526px;width:1311px;height:151px;border:1px solid #8d99ae;background:#bcc8dd"></div><div class="bt" style="left:206px;width:97px"></div><div class="bt act" style="left:305px;width:96px"></div><div class="bt" style="left:402px;width:82px"></div><div class="bt" style="left:485px;width:98px"></div><div class="bt" style="left:585px;width:92px"></div><div class="bt" style="left:679px;width:93px"></div><div class="bt" style="left:774px;width:81px"></div><div class="bt" style="left:857px;width:85px"></div><div class="bt" style="left:943px;width:81px"></div><div class="bt" style="left:1025px;width:76px"></div><div class="bt" style="left:1103px;width:70px"></div><div class="bt" style="left:1174px;width:85px"></div><div class="a " style="left:202px;top:526px;width:1309px;height:4px;background:#fde29b;border-top:1px solid #f3dca4"></div><div class="a " style="left:202px;top:530px;width:1309px;height:1px;background:#d9dfe9"></div><div class="a " style="left:306px;top:525px;width:94px;height:3px;background:#fee7ab"></div><svg style="left:212px;top:505px" width="16" height="16" viewBox="0 0 16 16"><rect x="1.2" y="4.2" width="5.8" height="3.8" rx="1.5" fill="#eaf2ff" stroke="#2f6fd0" stroke-width="1.1"/><rect x="9" y="4.2" width="5.8" height="3.8" rx="1.5" fill="#eaf2ff" stroke="#2f6fd0" stroke-width="1.1"/><rect x="1.2" y="10.2" width="5.8" height="3.8" rx="1.5" fill="#eaf2ff" stroke="#2f6fd0" stroke-width="1.1"/><rect x="9" y="10.2" width="5.8" height="3.8" rx="1.5" fill="#eaf2ff" stroke="#2f6fd0" stroke-width="1.1"/></svg><div class="t " style="left:236.0px;top:508px;letter-spacing:-0.23px;color:#1e2740;">Specyfikacja</div><svg style="left:314px;top:505px" width="16" height="16" viewBox="0 0 16 16"><rect x="1.8" y="1" width="6.4" height="6.6" rx="0.8" fill="#f4f7ff" stroke="#4a5cc0" stroke-width="0.9"/><rect x="8.2" y="1" width="6.4" height="6.6" rx="0.8" fill="#f4f7ff" stroke="#4a5cc0" stroke-width="0.9"/><rect x="1.8" y="7.6" width="6.4" height="6.6" rx="0.8" fill="#f4f7ff" stroke="#4a5cc0" stroke-width="0.9"/></svg><div class="t " style="left:335.0px;top:508px;letter-spacing:-0.15px;color:#1e2740;">Rezerwacje</div><svg style="left:411px;top:505px" width="16" height="16" viewBox="0 0 16 16"><ellipse cx="8" cy="3.5" rx="5.5" ry="2.5" fill="#fbc24a" stroke="#d9861a" stroke-width="0.8"/><path d="M2.5 3.5 V12.5 Q8 16 13.5 12.5 V3.5 Q8 7 2.5 3.5 Z" fill="#f5a623" stroke="#d9861a" stroke-width="0.8"/><path d="M2.5 6.5 Q8 10 13.5 6.5 M2.5 9.5 Q8 13 13.5 9.5" fill="none" stroke="#fde1a0" stroke-width="1"/><path d="M9 5.5 V14.5" stroke="#e8522a" stroke-width="1.4"/></svg><div class="t " style="left:431.0px;top:508px;letter-spacing:-0.05px;color:#1e2740;">Produkty</div><svg style="left:493px;top:505px" width="16" height="16" viewBox="0 0 16 16"><rect x="5" y="0.8" width="6" height="5" fill="#fff" stroke="#3d55b8" stroke-width="1"/><path d="M8 6 V9 M2.5 11 V9 H13.5 V11" fill="none" stroke="#444" stroke-width="0.9"/><circle cx="2.5" cy="12.5" r="1.8" fill="#7cc236" stroke="#4f8a1f" stroke-width="0.6"/><circle cx="8" cy="12.5" r="1.8" fill="#7cc236" stroke="#4f8a1f" stroke-width="0.6"/><circle cx="13.5" cy="12.5" r="1.8" fill="#7cc236" stroke="#4f8a1f" stroke-width="0.6"/></svg><div class="t " style="left:514.0px;top:508px;letter-spacing:-0.38px;color:#1e2740;">Egzemplarze</div><svg style="left:593px;top:505px" width="16" height="16" viewBox="0 0 16 16"><rect x="5.5" y="1" width="5" height="6" fill="#2e9ad8"/><rect x="1" y="8" width="6.5" height="6.5" fill="#e02a2a"/><rect x="8.5" y="8" width="6.5" height="6.5" fill="#62b82f"/></svg><div class="t " style="left:614.0px;top:508px;letter-spacing:-0.18px;color:#1e2740;">Dokumenty</div><svg style="left:688px;top:505px" width="16" height="16" viewBox="0 0 16 16"><path d="M1.5 3 V13.5 H12 M4.5 4.5 V10.5 H12 M7.5 6 V7.8 H11" fill="none" stroke="#6a9a2a" stroke-width="1.3"/><circle cx="12" cy="3.5" r="2.4" fill="#a6d44a" stroke="#6a9a2a" stroke-width="0.6"/></svg><div class="t " style="left:709.0px;top:508px;letter-spacing:-0.06px;color:#1e2740;">Aktywność</div><svg style="left:782px;top:505px" width="16" height="16" viewBox="0 0 16 16"><path d="M2 4 L10 2.5 L14 4 V12.5 L6 14.5 L2 12.5 Z" fill="#f5a623" stroke="#b8730d" stroke-width="0.8"/><path d="M2 4 L6 5.5 L14 4 M6 5.5 V14.5" fill="none" stroke="#b8730d" stroke-width="0.8"/><path d="M2 4 L10 2.5 L14 4 L6 5.5 Z" fill="#fbd58a"/></svg><div class="t " style="left:803.0px;top:508px;letter-spacing:-0.22px;color:#1e2740;">Przesyłki</div><svg style="left:864px;top:505px" width="16" height="16" viewBox="0 0 16 16"><path d="M1.5 8.2 H7.5 V11.6 H1.5 Z" fill="#f29a1c"/><path d="M8 9 H11.2 L13.6 10.4 V11.8 H8 Z" fill="#222"/><circle cx="3.6" cy="12.2" r="1.2" fill="#222"/><circle cx="11" cy="12.2" r="1.2" fill="#222"/><path d="M2 7.2 L3.4 6.2 L4.6 7.2" stroke="#222" stroke-width="0.9" fill="none"/><path d="M6.6 9.4 H9" stroke="#222" stroke-width="1"/></svg><div class="t " style="left:886.0px;top:508px;letter-spacing:0.04px;color:#1e2740;">Transport</div><svg style="left:951px;top:505px" width="16" height="16" viewBox="0 0 16 16"><path d="M1 6 L8 3 L15 6 L8 9 Z" fill="#1f6fc8"/><path d="M1 6 L8 9 L15 6 L15 8 L8 11.5 L1 8 Z" fill="#7fc4f2"/><path d="M3 9 L8 11.5 L13 9 L8 13.5 Z" fill="#2f86e8"/></svg><div class="t " style="left:972.0px;top:508px;letter-spacing:-0.03px;color:#1e2740;">Dostawy</div><svg style="left:1033px;top:505px" width="16" height="16" viewBox="0 0 16 16"><circle cx="8" cy="8" r="6.3" fill="#fff" stroke="#d0281e" stroke-width="2.2"/><path d="M5.5 5.8 H10 V10.5" fill="none" stroke="#b02018" stroke-width="1.8"/></svg><div class="t " style="left:1055.0px;top:508px;letter-spacing:-0.39px;color:#1e2740;">Zadania</div><svg style="left:1110px;top:505px" width="16" height="16" viewBox="0 0 16 16"><rect x="0.8" y="3.6" width="11.4" height="9" rx="1.2" fill="#9a3216" stroke="#6a1c0a" stroke-width="0.8"/><path d="M4 3.6 V2 H8.6 V3.6" fill="none" stroke="#c9c2b8" stroke-width="1.1"/><rect x="2.2" y="6.4" width="2" height="2.2" fill="#f0c060"/><path d="M1 5.6 H12" stroke="#c05a30" stroke-width="1"/><path d="M5.4 7.6 H9.4 L10.4 8.8 H15.4 V15 H5.4 Z" fill="#f0a01c" stroke="#b06a08" stroke-width="0.8"/><path d="M5.8 10.4 H15" stroke="#fbd88a" stroke-width="1.4"/></svg><div class="t " style="left:1132.0px;top:508px;letter-spacing:0.34px;color:#1e2740;">Oferty</div><svg style="left:1182px;top:505px" width="16" height="16" viewBox="0 0 16 16"><rect x="1" y="2" width="7" height="9" fill="#7cc236" stroke="#3f7a12" stroke-width="0.8"/><path d="M2 1 L5 3 L2 5 Z" fill="#1a5a0a"/><rect x="8" y="3" width="6.5" height="11" rx="1" fill="#f5a623" stroke="#b8730d" stroke-width="0.8"/><circle cx="11.2" cy="8" r="1.8" fill="none" stroke="#7a4a0a" stroke-width="1"/><rect x="3" y="11" width="6" height="4" rx="1" fill="#dfe3ea" stroke="#777" stroke-width="0.7"/></svg><div class="t " style="left:1205.0px;top:508px;letter-spacing:-0.39px;color:#1e2740;">Załączniki</div><svg style="left:212px;top:537px" width="15" height="15" viewBox="0 0 15 15"><rect x="1" y="0.8" width="6.6" height="7" rx="0.8" fill="#f4f7ff" stroke="#3d48b0" stroke-width="0.9"/><rect x="7.6" y="0.8" width="6.6" height="7" rx="0.8" fill="#f4f7ff" stroke="#3d48b0" stroke-width="0.9"/><rect x="1" y="7.8" width="6.6" height="6.6" rx="0.8" fill="#f4f7ff" stroke="#3d48b0" stroke-width="0.9"/></svg><svg style="left:212px;top:564px" width="15" height="15" viewBox="0 0 15 15"><path d="M1.2 3.5 V12.8 H11 M4 5 V10 H11 M6.8 6.5 V7.4 H10" fill="none" stroke="#6aa02a" stroke-width="1.2"/><circle cx="11.4" cy="3.4" r="2.3" fill="#b4e44a" stroke="#7ab02a" stroke-width="0.5"/></svg><svg style="left:211px;top:588px" width="16" height="16" viewBox="0 0 16 16"><path d="M8 1 L10 5.5 L15 6.2 L11.5 9.5 L12.5 14.5 L8 12 L3.5 14.5 L4.5 9.5 L1 6.2 L6 5.5 Z" fill="#3aa0e8" stroke="#1f6fc8" stroke-width="0.6"/><path d="M4 9 H12 L11.5 12 L8 10.5 L4.5 12 Z" fill="#9ad4f8"/></svg><svg style="left:208px;top:618px" width="16" height="18" viewBox="0 0 16 18"><rect x="4.5" y="1.5" width="10.5" height="10.5" fill="#f4f6fb" stroke="#8a96c8" stroke-width="1"/><path d="M0.3 0.6 H3.3 M1.8 0.6 V10.6 M0.3 10.6 H3.3" stroke="#1e2740" stroke-width="1"/><path d="M4.6 14 V17 M4.6 15.5 H15 M15 14 V17" stroke="#1e2740" stroke-width="1"/></svg><div class="a " style="left:235px;top:531px;width:1243px;height:141px;background:#fff"></div><div class="a " style="left:235px;top:531px;width:1243px;height:19px;background:linear-gradient(180deg,#f0f2f6 0,#e9ecf2 48%,#dde2eb 52%,#dfe4ec 100%)"></div><div class="a " style="left:246px;top:531px;width:2px;height:19px;background:linear-gradient(90deg,#c3cbda,#f6f8fb)"></div><div class="a " style="left:346px;top:531px;width:2px;height:19px;background:linear-gradient(90deg,#c3cbda,#f6f8fb)"></div><div class="a " style="left:376px;top:531px;width:2px;height:19px;background:linear-gradient(90deg,#c3cbda,#f6f8fb)"></div><div class="a " style="left:406px;top:531px;width:2px;height:19px;background:linear-gradient(90deg,#c3cbda,#f6f8fb)"></div><div class="a " style="left:446px;top:531px;width:2px;height:19px;background:linear-gradient(90deg,#c3cbda,#f6f8fb)"></div><div class="a " style="left:516px;top:531px;width:2px;height:19px;background:linear-gradient(90deg,#c3cbda,#f6f8fb)"></div><div class="a " style="left:580px;top:531px;width:2px;height:19px;background:linear-gradient(90deg,#c3cbda,#f6f8fb)"></div><div class="a " style="left:650px;top:531px;width:2px;height:19px;background:linear-gradient(90deg,#c3cbda,#f6f8fb)"></div><div class="a " style="left:720px;top:531px;width:2px;height:19px;background:linear-gradient(90deg,#c3cbda,#f6f8fb)"></div><div class="a " style="left:820px;top:531px;width:2px;height:19px;background:linear-gradient(90deg,#c3cbda,#f6f8fb)"></div><div class="a " style="left:850px;top:531px;width:2px;height:19px;background:linear-gradient(90deg,#c3cbda,#f6f8fb)"></div><div class="a " style="left:920px;top:531px;width:2px;height:19px;background:linear-gradient(90deg,#c3cbda,#f6f8fb)"></div><div class="a " style="left:990px;top:531px;width:2px;height:19px;background:linear-gradient(90deg,#c3cbda,#f6f8fb)"></div><div class="a " style="left:1060px;top:531px;width:2px;height:19px;background:linear-gradient(90deg,#c3cbda,#f6f8fb)"></div><div class="a " style="left:1130px;top:531px;width:2px;height:19px;background:linear-gradient(90deg,#c3cbda,#f6f8fb)"></div><div class="a " style="left:1240px;top:531px;width:2px;height:19px;background:linear-gradient(90deg,#c3cbda,#f6f8fb)"></div><div class="a " style="left:1340px;top:531px;width:2px;height:19px;background:linear-gradient(90deg,#c3cbda,#f6f8fb)"></div><div class="t " style="left:238.0px;top:534px;font-size:9px;color:#222;">✻</div><div class="t " style="left:248.0px;top:535px;letter-spacing:0.04px;color:#3a4662;">Asortyment</div><div class="t " style="left:348.0px;top:535px;letter-spacing:0.09px;color:#3a4662;">Typ</div><div class="t " style="left:378.5px;top:535px;letter-spacing:-0.46px;color:#3a4662;">Ni…</div><div class="t " style="left:408.5px;top:535px;letter-spacing:-0.80px;color:#3a4662;">Jm</div><div class="t " style="left:448.5px;top:535px;letter-spacing:-0.23px;color:#3a4662;">Ilość zamó…</div><div class="t " style="left:518.5px;top:535px;letter-spacing:-0.03px;color:#3a4662;">Ilość do p…</div><div class="t " style="left:582.5px;top:535px;letter-spacing:-0.24px;color:#3a4662;">Zrealizowano</div><div class="t " style="left:652.5px;top:535px;color:#3a4662;">Pozostało …</div><div class="t " style="left:722.5px;top:535px;letter-spacing:-0.14px;color:#3a4662;">Status realizacji</div><div class="t " style="left:823.0px;top:535px;letter-spacing:0.28px;color:#3a4662;">Tr…</div><div class="t " style="left:853.0px;top:535px;letter-spacing:-0.12px;color:#3a4662;">Zarezerwo…</div><div class="t " style="left:923.0px;top:535px;letter-spacing:-0.09px;color:#3a4662;">Zapotrzeb…</div><div class="t " style="left:992.0px;top:535px;letter-spacing:-0.03px;color:#3a4662;">Stan dysp…</div><div class="t " style="left:1062.5px;top:535px;letter-spacing:-0.41px;color:#3a4662;">Braki</div><div class="t " style="left:1132.5px;top:535px;letter-spacing:-0.04px;color:#3a4662;">Status rezerwacji</div><div class="t " style="left:1242.0px;top:535px;letter-spacing:-0.10px;color:#3a4662;">Rezerwacja z partii</div><div class="t " style="left:1342.0px;top:535px;letter-spacing:-0.14px;color:#3a4662;">Numery partii</div><div class="a " style="left:235px;top:550px;width:1243px;height:19px;background:#eef6ee"></div><div class="a " style="left:235px;top:550px;width:11px;height:19px;background:#e4e9f1"></div><svg style="left:238px;top:556px" width="6" height="8" viewBox="0 0 6 8"><circle cx="3" cy="2.5" r="2.4" fill="#111"/><circle cx="2.4" cy="1.9" r="0.8" fill="#ddd"/><path d="M3 4.5 V8" stroke="#111" stroke-width="1.3"/></svg><div class="t " style="left:813.0px;top:553px;letter-spacing:-0.04px;color:#6a748a;">kliknij aby dodać filtr</div><div class="a " style="left:235px;top:568px;width:1243px;height:2px;background:linear-gradient(180deg,#aeb8ca,#8792ab)"></div><div class="a " style="left:235px;top:570px;width:1243px;height:18px;background:#fef5e1"></div><div class="a " style="left:235px;top:570px;width:11px;height:18px;background:#e1e6ee"></div><svg style="left:239px;top:575px" width="5" height="7" viewBox="0 0 5 7"><path d="M0 0 L5 3.5 L0 7 Z" fill="#111"/></svg><div class="t " style="left:248.0px;top:573px;letter-spacing:-0.18px;color:#15192a;">Sprężyna</div><svg style="left:351px;top:570px" width="14" height="16" viewBox="0 0 14 16"><path d="M1.5 2.5 Q7 0 12.5 2.5 V13.5 Q7 16 1.5 13.5 Z" fill="#4a9be8" stroke="#1f5fb8" stroke-width="1"/><path d="M3.5 4.5 Q7 3.2 10.5 4.5 V12.5 Q7 13.8 3.5 12.5 Z" fill="#a8d4fa"/></svg><div class="t " style="left:370.0px;top:573px;color:#15192a;">S</div><div class="t " style="left:408.5px;top:573px;color:#15192a;">szt</div><div class="t " style="left:482.5px;top:573px;letter-spacing:-0.27px;color:#15192a;">10 000</div><div class="t " style="left:641.9px;top:573px;color:#15192a;">0</div><div class="t " style="left:686.5px;top:573px;letter-spacing:-0.27px;color:#15192a;">10 000</div><svg style="left:724px;top:571px" width="14" height="14" viewBox="0 0 14 14"><path d="M4 1 H13 V10 L10 7 L3.5 13.5 L0.5 10.5 L7 4 Z" fill="#3fae2a" stroke="#2a8a1a" stroke-width="0.6"/></svg><div class="t " style="left:743.5px;top:573px;letter-spacing:-0.36px;color:#15192a;">Oczekuje</div><svg style="left:831px;top:571px" width="12" height="15" viewBox="0 0 12 15"><path d="M2.5 14 Q1 11 1 8 L0.8 6.5 Q1.5 5.5 2.5 7 V3 Q3.3 2 4 3 V2 Q4.8 1 5.5 2 V2 Q6.3 1 7 2 V3 Q7.8 2.2 8.5 3.2 V9 Q9.5 7 11 7.5 Q10 10.5 8.5 14 Z" fill="#fff" stroke="#111" stroke-width="0.9"/><path d="M4 3 V7 M5.5 2 V7 M7 3 V7" stroke="#111" stroke-width="0.7"/></svg><div class="t " style="left:886.5px;top:573px;letter-spacing:-0.27px;color:#15192a;">10 000</div><div class="t " style="left:981.9px;top:573px;color:#15192a;">0</div><div class="t " style="left:1026.5px;top:573px;letter-spacing:-0.27px;color:#15192a;">12 499</div><div class="t " style="left:1121.9px;top:573px;color:#15192a;">0</div><svg style="left:1135px;top:570px" width="15" height="16" viewBox="0 0 15 16"><path d="M1.5 5 L5 2.5 L10.5 4 V13 L6.5 15.5 L1.5 13.5 Z" fill="#d8281e" stroke="#8f140f" stroke-width="0.8"/><path d="M6.5 6.5 L10.5 4 V13 L6.5 15.5 Z" fill="#a8140f"/><path d="M1.5 5 L6.5 6.5 L10.5 4 L5 2.5 Z" fill="#f08a80"/><rect x="10" y="0.5" width="4.5" height="4.5" fill="#111"/></svg><div class="t " style="left:1154.0px;top:573px;letter-spacing:-0.14px;color:#15192a;">Zarezerwowano</div><div class="a " style="left:235px;top:656px;width:1243px;height:16px;background:#e4e7ee;border-top:1px solid #d5dae4"></div><svg style="left:241px;top:661px" width="5" height="7" viewBox="0 0 5 7"><path d="M5 0 L0 3.5 L5 7 Z" fill="#9aa3b5"/></svg><svg style="left:1468px;top:661px" width="5" height="7" viewBox="0 0 5 7"><path d="M0 0 L5 3.5 L0 7 Z" fill="#7d8699"/></svg><div class="a " style="left:253px;top:657px;width:986px;height:14px;background:linear-gradient(180deg,#f3f5f9,#d8dee9);border:1px solid #a4aec1;border-radius:2px"></div><div class="a " style="left:741px;top:660px;width:7px;height:7px;border-left:1px solid #59627a;border-right:1px solid #59627a"></div><div class="a " style="left:744px;top:660px;width:1px;height:7px;background:#59627a"></div><svg style="left:1487px;top:536px" width="16" height="15" viewBox="0 0 16 15"><path d="M5.5 2.5 H15 M5.5 7.5 H15 M5.5 12.5 H15" stroke="#fff" stroke-width="2.6" stroke-linecap="round"/><circle cx="2.2" cy="2.5" r="1.6" fill="#e8f2ff" stroke="#2a66d0" stroke-width="1"/><circle cx="2.2" cy="7.5" r="1.6" fill="#e8f2ff" stroke="#2a66d0" stroke-width="1"/><circle cx="2.2" cy="12.5" r="1.6" fill="#e8f2ff" stroke="#2a66d0" stroke-width="1"/><path d="M6 2.5 H14.5 M6 7.5 H14.5 M6 12.5 H14.5" stroke="#1c2748" stroke-width="1"/></svg><div class="a " style="left:202px;top:673px;width:1309px;height:4px;background:#fde29b"></div><div class="a " style="left:850px;top:680px;width:2px;height:2px;background:#6f7fa8"></div><div class="a " style="left:854px;top:680px;width:2px;height:2px;background:#6f7fa8"></div><div class="a " style="left:858px;top:680px;width:2px;height:2px;background:#6f7fa8"></div><div class="a " style="left:862px;top:680px;width:2px;height:2px;background:#6f7fa8"></div><div class="t " style="left:770.0px;top:686px;color:#1e2740;letter-spacing:2.2px;">UKRYJ SZCZEGÓŁY [F8]</div><div class="a " style="left:201px;top:702px;width:1312px;height:4px;background:#fde29b"></div><div class="a " style="left:8px;top:707px;width:1506px;height:17px;background:linear-gradient(180deg,#e6eaf1,#d7dde8);border-top:1px solid #eef1f6"></div><div class="a " style="left:461px;top:708px;width:1px;height:15px;background:#c5ccda"></div><div class="a " style="left:917px;top:708px;width:1px;height:15px;background:#c5ccda"></div><div class="a " style="left:1373px;top:708px;width:1px;height:15px;background:#c5ccda"></div><div class="t " style="left:12.0px;top:710px;letter-spacing:-0.03px;color:#3a4560;">Copyright © 2005-2024 RHO Software</div><div class="t " style="left:467.0px;top:710px;letter-spacing:0.03px;color:#3a4560;">Modus demo v.5.0.0.490</div><div class="t " style="left:922.0px;top:710px;letter-spacing:0.25px;color:#3a4560;">Nr licencji: 2223/111111111111111</div><div class="t " style="left:1399.0px;top:710px;letter-spacing:0.08px;color:#3a4560;">2024-10-31,  13:21:24</div><!-- s70_menu -->
<div id="ddm" class="a"></div><div class="a " style="left:673px;top:144px;width:240px;height:22px;background:#91c9f7;border:1px solid #7fb8ee"></div><div class="t " style="left:704.0px;top:126px;letter-spacing:-0.19px;font-size:12px;color:#000;line-height:15px;height:15px;">Wydanie WZ</div><svg style="left:678px;top:124px" width="15" height="16" viewBox="0 0 15 16"><rect x="3" y="1" width="9" height="12" rx="1" fill="#f3c86a" stroke="#b8860b" stroke-width="0.8"/><rect x="5" y="0.5" width="5" height="2.5" fill="#d9a83a"/><path d="M7 9 Q10 7 12 10 Q14 13 11 14.5 M8 14.5 L13.5 9.5" stroke="#d0281e" stroke-width="1.2" fill="none"/></svg><div class="t " style="left:704.0px;top:148px;letter-spacing:-0.27px;font-size:12px;color:#000;line-height:15px;height:15px;">Faktura</div><svg style="left:677px;top:146px" width="17" height="17" viewBox="0 0 17 17"><ellipse cx="10" cy="4" rx="4.5" ry="2" fill="#f7d060" stroke="#b8860b" stroke-width="0.7"/><path d="M5.5 4 V12 Q10 15 14.5 12 V4 Q10 7 5.5 4 Z" fill="#e8b02a" stroke="#b8860b" stroke-width="0.7"/><path d="M5.5 6.5 Q10 9.5 14.5 6.5 M5.5 9 Q10 12 14.5 9" stroke="#fbe08a" stroke-width="0.9" fill="none"/><ellipse cx="5.5" cy="10" rx="4.5" ry="2" fill="#f7d060" stroke="#b8860b" stroke-width="0.7"/><path d="M1 10 V13.5 Q5.5 16.5 10 13.5 V10 Q5.5 13 1 10 Z" fill="#d99a1a" stroke="#b8860b" stroke-width="0.7"/></svg><div class="t " style="left:704.0px;top:170px;letter-spacing:0.15px;font-size:12px;color:#000;line-height:15px;height:15px;">Pro-forma</div><svg style="left:678px;top:169px" width="13" height="15" viewBox="0 0 13 15"><rect x="1.5" y="1" width="10" height="13" rx="1.5" fill="#fff" stroke="#4a6ad0" stroke-width="1.1"/><rect x="3" y="2.5" width="7" height="2.2" fill="#c9d4f2"/><rect x="3" y="9" width="7" height="3.2" fill="#9fb0e6"/></svg><div class="t " style="left:704.0px;top:192px;letter-spacing:-0.31px;font-size:12px;color:#000;line-height:15px;height:15px;">Zaliczka</div><svg style="left:678px;top:191px" width="13" height="15" viewBox="0 0 13 15"><rect x="1.5" y="1" width="10" height="13" rx="1.5" fill="#fff" stroke="#4a6ad0" stroke-width="1.1"/><rect x="3" y="2.5" width="7" height="2.2" fill="#c9d4f2"/><rect x="3" y="9" width="7" height="3.2" fill="#9fb0e6"/></svg><div class="t " style="left:704.0px;top:214px;letter-spacing:-0.25px;font-size:12px;color:#000;line-height:15px;height:15px;">Finalna</div><svg style="left:678px;top:213px" width="13" height="15" viewBox="0 0 13 15"><rect x="1.5" y="1" width="10" height="13" rx="1.5" fill="#fff" stroke="#4a6ad0" stroke-width="1.1"/><rect x="3" y="2.5" width="7" height="2.2" fill="#c9d4f2"/><rect x="3" y="9" width="7" height="3.2" fill="#9fb0e6"/></svg><div class="t " style="left:704.0px;top:236px;letter-spacing:-0.20px;font-size:12px;color:#000;line-height:15px;height:15px;">Finalna dla zrealizowanego ZO</div><svg style="left:678px;top:235px" width="13" height="15" viewBox="0 0 13 15"><rect x="1.5" y="1" width="10" height="13" rx="1.5" fill="#fff" stroke="#4a6ad0" stroke-width="1.1"/><rect x="3" y="2.5" width="7" height="2.2" fill="#c9d4f2"/><rect x="3" y="9" width="7" height="3.2" fill="#9fb0e6"/></svg><div class="t " style="left:704.0px;top:258px;letter-spacing:-0.71px;font-size:12px;color:#000;line-height:15px;height:15px;">Trasy</div><svg style="left:677px;top:258px" width="15" height="14" viewBox="0 0 15 14"><path d="M4 0.5 H6.5 V4 H8.5 V0.5 H11 L14.5 11 V13.5 H9 V8 H6 V13.5 H0.5 V11 Z" fill="#000"/><rect x="2.5" y="9.5" width="2" height="2" fill="#fff"/><rect x="10.5" y="9.5" width="2" height="2" fill="#fff"/></svg><div class="t " style="left:704.0px;top:280px;letter-spacing:-0.43px;font-size:12px;color:#000;line-height:15px;height:15px;">Szczegóły</div><svg style="left:678px;top:279px" width="15" height="15" viewBox="0 0 15 15"><rect x="0.8" y="0.8" width="11" height="12" rx="1" fill="#fff" stroke="#3a5ab8" stroke-width="1"/><path d="M3 3 V8.5 H6" stroke="#222" stroke-width="0.9" fill="none"/><circle cx="10" cy="10.5" r="2.6" fill="#dfe8fa" stroke="#3a5ab8" stroke-width="1"/><circle cx="10" cy="10.5" r="0.9" fill="#3a5ab8"/><path d="M12 12.5 L14 14.5" stroke="#3a5ab8" stroke-width="1.2"/></svg><div class="t " style="left:704.0px;top:302px;letter-spacing:-0.04px;font-size:12px;color:#000;line-height:15px;height:15px;">Zamówienie Zakupu</div><svg style="left:678px;top:301px" width="15" height="15" viewBox="0 0 15 15"><rect x="0.8" y="2" width="10" height="12.5" rx="1" fill="#fff" stroke="#3a5ab8" stroke-width="1"/><rect x="2.2" y="3.5" width="5.5" height="2.2" fill="#f0b23a"/><path d="M2.5 8 H9 M2.5 10 H9 M2.5 12 H9" stroke="#6f7fb0" stroke-width="1"/><path d="M12 0.5 V6.5 M9 3.5 H15" stroke="#2f7be0" stroke-width="2"/></svg><!-- s90_annot -->
<div class="rr" style="left:23px;top:139px;width:147px;height:29px"></div><div class="rr" style="left:630px;top:81px;width:43px;height:40px"></div><div class="rr" style="left:356px;top:312px;width:314px;height:19px;border-radius:5px"></div><div class="rr" style="left:669px;top:139px;width:247px;height:31px"></div><div class="rc" style="left:157.5px;top:154.5px">1</div><div class="rc" style="left:339.5px;top:295px">2</div><div class="rc" style="left:651px;top:119.5px">3</div></body></html>
